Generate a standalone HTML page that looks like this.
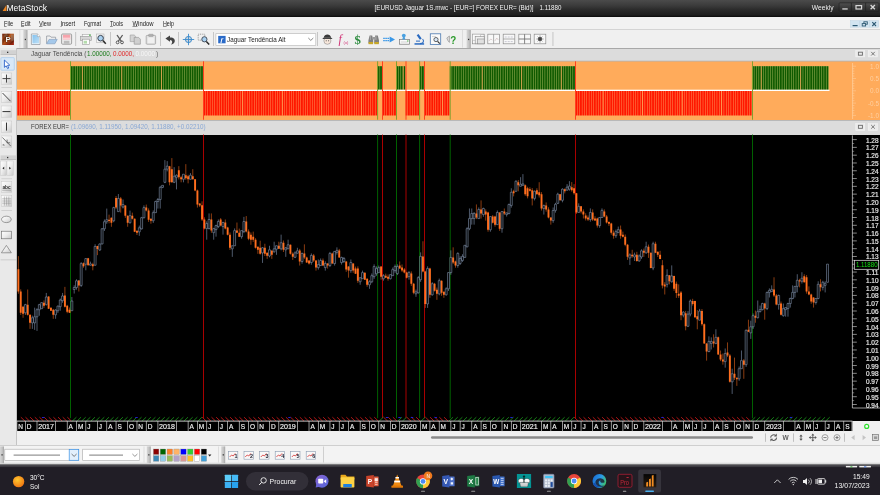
<!DOCTYPE html><html><head><meta charset="utf-8"><title>MetaStock</title><style>

html,body{margin:0;padding:0;}
body{width:880px;height:495px;overflow:hidden;background:#f0f0f0;position:relative;font-family:"Liberation Sans",sans-serif;}
.abs{position:absolute;}
#titlebar{left:0;top:0;width:880px;height:17.4px;background:linear-gradient(#4b4b4b 0%,#3a3a3a 35%,#2c2c2c 55%,#1f1f1f 88%,#0a0a0a 100%);}
#menubar{left:0;top:17.4px;width:880px;height:11.4px;background:#f2f2f2;}
#toolbar{left:0;top:28.8px;width:880px;height:19.2px;background:#f0f0f0;border-top:0.6px solid #d4d4d4;box-sizing:border-box;}
#lefttools{left:0;top:48px;width:16.4px;height:396.5px;background:#e9e9e9;border-right:0.6px solid #c4c4c4;}
#p1title{left:17px;top:48px;width:863px;height:13.3px;background:#dcdcdc;border-top:0.8px solid #a8a8a8;box-sizing:border-box;}
#p1{left:17px;top:61.3px;width:863px;height:58.4px;background:#ffab5b;}
#p2title{left:17px;top:119.7px;width:863px;height:15px;background:#dcdcdc;border-top:0.8px solid #b8b8b8;box-sizing:border-box;}
#chart{left:17px;top:134.6px;width:863px;height:296.7px;background:#000;}
#bottombar{left:0;top:444.5px;width:880px;height:21px;background:linear-gradient(#f3f3f3 0,#f3f3f3 80%,#d8d8d8 88%,#9a9a9a 94%,#4a4a4e 100%);border-top:0.6px solid #cfcfcf;box-sizing:border-box;}
#taskbar{left:0;top:465.4px;width:880px;height:30px;background:#211e26;}
svg{position:absolute;left:0;top:0;will-change:transform;}

</style></head><body>
<div id="titlebar" class="abs"></div>
<div id="menubar" class="abs"></div>
<div id="toolbar" class="abs"></div>
<div id="lefttools" class="abs"></div>
<div id="p1title" class="abs"></div>
<div id="p1" class="abs"></div>
<div id="p2title" class="abs"></div>
<div id="chart" class="abs"></div>
<div id="bottombar" class="abs"></div>
<div id="taskbar" class="abs"></div>
<svg width="880" height="495" viewBox="0 0 880 495" font-family='"Liberation Sans", sans-serif'>
<polygon points="2.6,10.9 6.5,10.9 6.5,4.8" fill="#ea8420"/>
<text x="6.4" y="10.9" font-size="9.1" fill="#fff" textLength="40.6" lengthAdjust="spacingAndGlyphs">MetaStock</text>
<text x="374.5" y="10.1" font-size="6.4" fill="#f2f2f2" textLength="159" lengthAdjust="spacingAndGlyphs">[EURUSD Jaguar 1S.mwc - [EUR=] FOREX EUR= (Bid)]</text>
<text x="539.5" y="10.1" font-size="6.4" fill="#f4f4f4" textLength="22" lengthAdjust="spacingAndGlyphs">1.11880</text>
<text x="811.8" y="9.9" font-size="6.7" fill="#f0f0f0" textLength="21.8" lengthAdjust="spacingAndGlyphs">Weekly</text>
<defs><linearGradient id="wb" x1="0" y1="0" x2="0" y2="1"><stop offset="0" stop-color="#505050"/><stop offset="0.5" stop-color="#3c3c3c"/><stop offset="1" stop-color="#2a2a2a"/></linearGradient></defs>
<rect x="839.1" y="2.9" width="39.8" height="8.3" rx="0.8" fill="url(#wb)" stroke="#1a1a1a" stroke-width="0.5"/>
<path d="M851.4 2.9 v8.3 M865.6 2.9 v8.3" stroke="#1c1c1c" stroke-width="0.6"/>
<rect x="842.3" y="8.3" width="5.4" height="1.3" fill="#d8d8d8"/>
<rect x="856" y="5.6" width="5.6" height="3.4" fill="none" stroke="#d8d8d8" stroke-width="1.2"/>
<path d="M870.6 5 L874.9 9.2 M874.9 5 L870.6 9.2" stroke="#d8d8d8" stroke-width="1.3"/>
<text x="4" y="25.8" font-size="7.3" fill="#222" textLength="9.2" lengthAdjust="spacingAndGlyphs">File</text>
<text x="21" y="25.8" font-size="7.3" fill="#222" textLength="9.5" lengthAdjust="spacingAndGlyphs">Edit</text>
<text x="39" y="25.8" font-size="7.3" fill="#222" textLength="12" lengthAdjust="spacingAndGlyphs">View</text>
<text x="60.5" y="25.8" font-size="7.3" fill="#222" textLength="14.5" lengthAdjust="spacingAndGlyphs">Insert</text>
<text x="84" y="25.8" font-size="7.3" fill="#222" textLength="17" lengthAdjust="spacingAndGlyphs">Format</text>
<text x="110" y="25.8" font-size="7.3" fill="#222" textLength="13" lengthAdjust="spacingAndGlyphs">Tools</text>
<text x="132.5" y="25.8" font-size="7.3" fill="#222" textLength="21" lengthAdjust="spacingAndGlyphs">Window</text>
<text x="163" y="25.8" font-size="7.3" fill="#222" textLength="11" lengthAdjust="spacingAndGlyphs">Help</text>
<rect x="4" y="26.4" width="2.6" height="0.55" fill="#444"/>
<rect x="21" y="26.4" width="3" height="0.55" fill="#444"/>
<rect x="39" y="26.4" width="3.4" height="0.55" fill="#444"/>
<rect x="60.5" y="26.4" width="1.2" height="0.55" fill="#444"/>
<rect x="88" y="26.4" width="2.8" height="0.55" fill="#444"/>
<rect x="110" y="26.4" width="2.8" height="0.55" fill="#444"/>
<rect x="132.5" y="26.4" width="5" height="0.55" fill="#444"/>
<rect x="163" y="26.4" width="3.6" height="0.55" fill="#444"/>
<rect x="850.5" y="20.6" width="9.3" height="6.6" fill="#d2e4f0" stroke="#b8d0e0" stroke-width="0.4"/>
<rect x="860" y="20.6" width="9.3" height="6.6" fill="#d2e4f0" stroke="#b8d0e0" stroke-width="0.4"/>
<rect x="869.5" y="20.6" width="9.3" height="6.6" fill="#d2e4f0" stroke="#b8d0e0" stroke-width="0.4"/>
<rect x="852.6" y="25" width="5" height="1.2" fill="#2c5872"/>
<rect x="863.9" y="21.8" width="3.4" height="2.4" fill="none" stroke="#2c5872" stroke-width="0.9"/><rect x="862.2" y="23.6" width="3.4" height="2.4" fill="#d2e4f0" stroke="#2c5872" stroke-width="0.9"/>
<path d="M872.3 22.2 L876 26 M876 22.2 L872.3 26" stroke="#2c5872" stroke-width="1.1"/>
<defs><linearGradient id="gg" x1="0" y1="0" x2="1" y2="0"><stop offset="0" stop-color="#d6d6d6"/><stop offset="0.55" stop-color="#c4c4c4"/><stop offset="1" stop-color="#a6a6a6"/></linearGradient><linearGradient id="bt" x1="0" y1="0" x2="1" y2="1"><stop offset="0" stop-color="#ffffff"/><stop offset="0.5" stop-color="#ececec"/><stop offset="1" stop-color="#c8c8c8"/></linearGradient><linearGradient id="pgd" x1="0" y1="0" x2="1" y2="1"><stop offset="0" stop-color="#84c2ee"/><stop offset="1" stop-color="#bfe0f6"/></linearGradient><linearGradient id="pg" x1="0" y1="0" x2="1" y2="1"><stop offset="0" stop-color="#6a2410"/><stop offset="0.45" stop-color="#c05a1c"/><stop offset="0.7" stop-color="#8a3014"/><stop offset="1" stop-color="#a01c0c"/></linearGradient></defs>
<rect x="19.6" y="29.6" width="0.6" height="18" fill="#cfcfcf"/>
<rect x="2.2" y="33.7" width="11.7" height="11.3" fill="url(#pg)"/><path d="M2.2 40 l5 -6.3 h3 l-8 11.3z M9 45 l4.9 -7 v4z" fill="#4a1808" opacity="0.45"/><path d="M10.6 34.6 l3.3 0 v5.4 l-2.4 1.6z" fill="#9a8068" opacity="0.6"/><path d="M4 35 l3 -1 l1 2 l-3.4 1.6z" fill="#7a6a5a" opacity="0.5"/>
<text x="5.6" y="42.3" font-size="7.8" fill="#f6f2ee" font-weight="bold" stroke="#2a1408" stroke-width="0.6" paint-order="stroke">P</text>
<rect x="23.3" y="30" width="4.2" height="18" fill="url(#gg)"/><rect x="24.8" y="38.8" width="1.1" height="1.3" fill="#222"/>
<path d="M31.4 34 h6 l2.6 2.6 v7.9 h-8.6z" fill="#fff" stroke="#8a929c" stroke-width="0.7"/><path d="M32.4 35 h4.6 l2 2 v6.5 h-6.6z" fill="url(#pgd)"/><path d="M37.4 34 v2.6 h2.6" fill="#fff" stroke="#8a929c" stroke-width="0.5"/>
<path d="M46.6 43.6 v-7.6 h3.4 l1 1.2 h4.6 v2.2" fill="#f0f0f0" stroke="#8a9098" stroke-width="0.7"/><path d="M46.6 43.8 l2.4 -4.4 h8.2 l-2.4 4.4z" fill="#a4c8ea" stroke="#7a97b8" stroke-width="0.6"/>
<rect x="61.6" y="34" width="10" height="10.2" rx="1" fill="#ececec" stroke="#8c8c8c" stroke-width="0.8"/><rect x="63" y="34.8" width="7.2" height="4.6" fill="#f7a4ac"/><rect x="63" y="37.6" width="7.2" height="1.8" fill="#fbd0d4"/><rect x="63.8" y="40.8" width="5.6" height="3" fill="#bcbcbc"/>
<rect x="75.4" y="32" width="0.7" height="14" fill="#b4b4b4"/>
<rect x="82.2" y="34.4" width="8" height="2.6" fill="#fafafa" stroke="#999" stroke-width="0.5"/><rect x="80.4" y="36.6" width="11" height="4" fill="#d8d8d8" stroke="#999" stroke-width="0.6"/><rect x="82.4" y="39.2" width="7" height="5.2" fill="#fdfdfd" stroke="#999" stroke-width="0.6"/><rect x="83.6" y="40.8" width="3.4" height="2.8" fill="#b4dcac"/><rect x="89.2" y="34.4" width="1.4" height="1.6" fill="#58c058"/>
<rect x="96.4" y="34" width="7.6" height="8.6" fill="#f4f4f4" stroke="#a8a8a8" stroke-width="0.5"/><circle cx="100.6" cy="38.2" r="2.8" fill="#a8d0f0" stroke="#3c4450" stroke-width="1"/><path d="M102.8 40.4 L105.8 43.8" stroke="#2a2a2a" stroke-width="1.5"/>
<rect x="110.3" y="32" width="0.7" height="14" fill="#b4b4b4"/>
<path d="M117 35 L121.4 41.4 M122.6 35 L118.2 41.4" stroke="#5a5a5a" stroke-width="1.3" fill="none"/><circle cx="117.6" cy="42.4" r="1.4" fill="none" stroke="#4a4a4a" stroke-width="0.9"/><circle cx="122" cy="42.4" r="1.4" fill="none" stroke="#4a4a4a" stroke-width="0.9"/>
<path d="M130.2 35 h4 l1.6 1.6 v5 h-5.6z" fill="#d4d4d4" stroke="#9a9a9a" stroke-width="0.6"/><path d="M134.2 37.4 h4.4 l1.8 1.8 v5 h-6.2z" fill="#d0d0d0" stroke="#8e8e8e" stroke-width="0.6"/>
<rect x="146.2" y="35.4" width="9.4" height="8.8" rx="0.8" fill="#e2e2e2" stroke="#9a9a9a" stroke-width="0.7"/><rect x="148.6" y="34.2" width="4.6" height="2.2" rx="0.6" fill="#b0b0b0" stroke="#8a8a8a" stroke-width="0.4"/><rect x="147.8" y="37.6" width="6.2" height="5.6" fill="#f0f0f0"/>
<rect x="160.3" y="32" width="0.7" height="14" fill="#b4b4b4"/>
<path d="M165.4 38.6 L170 35.6 V37.4 C173.4 37.2 175.6 39.4 174.6 42 C174 43.6 172.6 44.4 171 44.4 C172.8 43 172.6 40.2 170 40 V41.8z" fill="#444"/>
<rect x="178.3" y="32" width="0.7" height="14" fill="#b4b4b4"/>
<circle cx="188.5" cy="39.5" r="3.1" fill="#d4d8dc" stroke="#3a8acc" stroke-width="1"/><path d="M188.5 33.8 V45.2 M182.8 39.5 H194.2" stroke="#3a8acc" stroke-width="0.9"/>
<rect x="198.2" y="34.2" width="6.6" height="6" fill="none" stroke="#666" stroke-width="0.6" stroke-dasharray="1 0.8"/><circle cx="204.4" cy="39.3" r="2.6" fill="#a8d0f0" stroke="#3c4450" stroke-width="0.9"/><path d="M206.3 41.4 L209.2 44.4" stroke="#2a2a2a" stroke-width="1.5"/>
<rect x="213.2" y="32" width="0.7" height="14" fill="#b4b4b4"/>
<rect x="215.9" y="33.7" width="99.9" height="11.8" fill="#fff" stroke="#b4b4b4" stroke-width="0.6"/>
<rect x="317.3" y="32" width="0.7" height="14" fill="#b4b4b4"/>
<rect x="218.2" y="35.9" width="7.4" height="7.4" fill="#2a6ac8"/>
<text x="220.6" y="42" font-size="7" fill="#fff" font-style="italic" font-weight="bold" font-family="Liberation Serif, serif">f</text>
<text x="227.1" y="41.9" font-size="7.1" fill="#222" textLength="58.4" lengthAdjust="spacingAndGlyphs">Jaguar Tendência Alt</text>
<path d="M308.3 38 L310.8 40.4 L313.3 38" fill="none" stroke="#555" stroke-width="0.7"/>
<circle cx="327.4" cy="40.8" r="3.5" fill="#f8e8dc" stroke="#777" stroke-width="0.5"/><path d="M322.2 39 H332.6 L331 37.6 C330.6 33.6 324.2 33.6 323.8 37.6z" fill="#3a3a3a"/><path d="M324 37.8 h6.8" stroke="#888" stroke-width="0.6"/><circle cx="326.2" cy="40.8" r="0.5" fill="#333"/><circle cx="328.6" cy="40.8" r="0.5" fill="#333"/>
<text x="338.4" y="43" font-size="12" fill="#d03476" font-style="italic" font-family="Liberation Serif, serif">f</text>
<text x="343.6" y="44.2" font-size="3.8" fill="#d03476" textLength="4.8" lengthAdjust="spacingAndGlyphs">(x)</text>
<text x="354.6" y="43.8" font-size="11.5" fill="#2a8a3c" font-weight="bold" font-family="Liberation Serif, serif" textLength="6.4" lengthAdjust="spacingAndGlyphs">$</text>
<path d="M369.6 35.4 h2.6 l1 5 v3 h-4.8 v-3z M375.2 35.4 h2.6 l1.2 5 v3 h-4.8 v-3z" fill="#808080"/><rect x="372.4" y="37" width="3.2" height="2.6" fill="#9a9a9a"/><rect x="368.6" y="42" width="4.4" height="2.2" fill="#c8a828"/><rect x="374.4" y="42" width="4.4" height="2.2" fill="#c8a828"/><path d="M370.4 36 v4 M376 36 v4" stroke="#c0c0c0" stroke-width="0.6"/>
<path d="M383.2 38.4 h6.4 M383.2 40.6 h6.4" stroke="#3a98e8" stroke-width="1.3" stroke-dasharray="1.6 0.5"/><path d="M389.6 36.6 L395 39.5 L389.6 42.4z" fill="#3a98e8"/>
<rect x="399.4" y="39.4" width="10" height="4.8" fill="#fafafa" stroke="#777" stroke-width="0.7"/><path d="M400.8 42 h7" stroke="#bbb" stroke-width="0.6"/><rect x="407.2" y="40.4" width="1.2" height="1.2" fill="#48b048"/><path d="M402.2 39.4 l0.8 -2.4 h1.6 l0.8 2.4z" fill="#4aa0e0"/><circle cx="403.8" cy="35.6" r="1.9" fill="#4aa0e0"/>
<path d="M418.5 34 l3.2 4.6 l-1.8 1.2 l-3.2 -4.6z" fill="#2a6ac0"/><path d="M422.6 39 C424.6 41.4 423 43.6 420 43.6" fill="none" stroke="#2a6ac0" stroke-width="1.1"/><rect x="414.5" y="43.2" width="9.6" height="1.5" fill="#2a6ac0"/><rect x="416" y="40.6" width="4" height="1" fill="#2a6ac0"/>
<rect x="430.3" y="33.8" width="10.4" height="10.6" fill="#fafafa" stroke="#4a78b0" stroke-width="0.8"/><path d="M432 36.6 h4" stroke="#aaa" stroke-width="0.5"/><circle cx="436" cy="39.6" r="2.1" fill="#d8e8f8" stroke="#444" stroke-width="0.8"/><path d="M437.6 41.3 L439.8 43.6" stroke="#333" stroke-width="1.2"/>
<path d="M446.8 38 l2.6 -2 v6.4 l-1.4 -1.6z" fill="#e0e0e0" stroke="#777" stroke-width="0.5"/>
<text x="450.2" y="44" font-size="10" fill="#2a9a2a" textLength="6" lengthAdjust="spacingAndGlyphs" font-weight="bold">?</text>
<rect x="462.4" y="29.6" width="0.6" height="18" fill="#cfcfcf"/>
<rect x="466.6" y="30" width="4.2" height="18" fill="url(#gg)"/><rect x="468.1" y="38.8" width="1.1" height="1.3" fill="#222"/>
<rect x="472.6" y="34.2" width="11.6" height="9.6" fill="#f8f8f8" stroke="#8c8c8c" stroke-width="0.7"/>
<rect x="472.6" y="34.2" width="8" height="6" fill="#fafafa" stroke="#aaa" stroke-width="0.5"/><rect x="475.20000000000005" y="36.6" width="9" height="7.2" fill="#f0f0f0" stroke="#8c8c8c" stroke-width="0.6"/><rect x="477.40000000000003" y="39" width="6.8" height="4.8" fill="#e0e0e0" stroke="#8c8c8c" stroke-width="0.6"/>
<rect x="487.8" y="34.2" width="11.6" height="9.6" fill="#f8f8f8" stroke="#8c8c8c" stroke-width="0.7"/>
<path d="M493.6 34.2 v9.6" stroke="#8c8c8c" stroke-width="0.7"/><path d="M488.8 41 l2 -2 l1.5 1 M494.8 41 l2 -3 l1.5 2" stroke="#c0a8a8" stroke-width="0.5" fill="none"/>
<rect x="503.2" y="34.2" width="11.6" height="9.6" fill="#f8f8f8" stroke="#8c8c8c" stroke-width="0.7"/>
<path d="M503.2 39 h11.6" stroke="#8c8c8c" stroke-width="0.7"/><path d="M504.7 37 h8 M504.7 41.6 h8" stroke="#a8a8b8" stroke-width="0.6" stroke-dasharray="2 1"/>
<rect x="518.8" y="34.2" width="11.6" height="9.6" fill="#f8f8f8" stroke="#8c8c8c" stroke-width="0.7"/>
<path d="M518.8 39 h11.6 M524.5999999999999 34.2 v9.6" stroke="#666" stroke-width="0.8"/>
<rect x="534.2" y="34.2" width="11.6" height="9.6" fill="#f8f8f8" stroke="#8c8c8c" stroke-width="0.7"/>
<circle cx="540.0" cy="39" r="2" fill="#444"/><path d="M540.0 35.4 v7.2 M536.4000000000001 39 h7.2 M537.6 36.6 l4.8 4.8 M542.4000000000001 36.6 l-4.8 4.8" stroke="#444" stroke-width="0.5"/>
<rect x="552.6" y="32" width="0.7" height="14" fill="#b4b4b4"/>
<rect x="0.6" y="50.2" width="15.6" height="4.4" fill="#d2d2d2"/><rect x="0.6" y="54.1" width="15.6" height="0.5" fill="#a8a8a8"/><rect x="7" y="51.7" width="1.3" height="1.3" fill="#333"/>
<rect x="0.9" y="57.6" width="13.4" height="12.6" rx="0.8" fill="#d8e8f8" stroke="#9cc4ec" stroke-width="0.6"/>
<path d="M4.4 60 L4.4 67.4 L6.2 65.8 L7.6 68.6 L8.8 68 L7.5 65.4 L9.8 65.2z" fill="#fff" stroke="#2a62c8" stroke-width="0.9" stroke-linejoin="round"/>
<rect x="1.2" y="73" width="10.6" height="11.2" fill="url(#bt)" stroke="#c0c0c0" stroke-width="0.4"/>
<path d="M6.5 74.6 v8 M2.5 78.6 h8" stroke="#333" stroke-width="0.9"/>
<rect x="1.4" y="87" width="10.6" height="0.5" fill="#b8b8b8"/>
<rect x="1.2" y="91.5" width="10.6" height="11.2" fill="url(#bt)" stroke="#c0c0c0" stroke-width="0.4"/>
<path d="M2.5 93 L10.5 101.2" stroke="#333" stroke-width="0.9"/>
<rect x="1.2" y="106" width="10.6" height="11.2" fill="url(#bt)" stroke="#c0c0c0" stroke-width="0.4"/>
<path d="M2.5 111.6 h8" stroke="#333" stroke-width="1"/>
<rect x="1.2" y="121" width="10.6" height="11.2" fill="url(#bt)" stroke="#c0c0c0" stroke-width="0.4"/>
<path d="M6.5 122.6 v8" stroke="#333" stroke-width="1"/>
<rect x="1.2" y="136" width="10.6" height="11.2" fill="url(#bt)" stroke="#c0c0c0" stroke-width="0.4"/>
<path d="M2.3 137.4 L10.7 146 M7.1 139.6 v3.2 h3" stroke="#444" stroke-width="0.7" fill="none"/>
<text x="2.6" y="146.4" font-size="4" fill="#333">s</text>
<rect x="0.6" y="155.4" width="15.6" height="4.4" fill="#d2d2d2"/><rect x="0.6" y="159.3" width="15.6" height="0.5" fill="#a8a8a8"/><rect x="7" y="156.9" width="1.3" height="1.3" fill="#333"/>
<rect x="0.6" y="161" width="5.8" height="14.4" fill="url(#bt)" stroke="#c0c0c0" stroke-width="0.4"/><rect x="7" y="161" width="6.2" height="14.4" fill="url(#bt)" stroke="#c0c0c0" stroke-width="0.4"/>
<path d="M4.2 166.8 L2.4 168.2 L4.2 169.6z M9.2 166.8 L11 168.2 L9.2 169.6z" fill="#222"/>
<rect x="1.4" y="178.6" width="10.6" height="0.5" fill="#b8b8b8"/>
<rect x="1.2" y="181.6" width="10.6" height="10.6" fill="url(#bt)" stroke="#c0c0c0" stroke-width="0.4"/>
<text x="2.4" y="189.2" font-size="5.2" fill="#333" textLength="8.4" lengthAdjust="spacingAndGlyphs" font-weight="bold">abc</text>
<path d="M2.2 190.2 h8.8" stroke="#555" stroke-width="0.4"/>
<rect x="1.2" y="195.6" width="10.6" height="11" fill="url(#bt)" stroke="#c0c0c0" stroke-width="0.4"/>
<path d="M4.4 196.6 v9 M6.6 196.6 v9 M8.8 196.6 v9 M2.2 198.8 h9 M2.2 201 h9 M2.2 203.2 h9" stroke="#777" stroke-width="0.4"/>
<rect x="1.4" y="210" width="10.6" height="0.5" fill="#b8b8b8"/>
<ellipse cx="6.4" cy="219.4" rx="4.9" ry="3.2" fill="url(#bt)" stroke="#666" stroke-width="0.6"/>
<rect x="1.6" y="231.2" width="9.8" height="7.6" fill="url(#bt)" stroke="#666" stroke-width="0.6"/>
<path d="M6.4 245.4 L11.4 252.8 H1.4z" fill="url(#bt)" stroke="#666" stroke-width="0.6"/>
<rect x="0.6" y="259.6" width="15.6" height="0.6" fill="#b8b8b8"/>
<text x="31" y="56.2" font-size="6.7" fill="#4a4a4a" textLength="55.5" lengthAdjust="spacingAndGlyphs">Jaguar Tendência (</text>
<text x="87" y="56.2" font-size="6.7" fill="#1a7a1a" textLength="24.5" lengthAdjust="spacingAndGlyphs">1.00000,</text>
<text x="113" y="56.2" font-size="6.7" fill="#e02828" textLength="21" lengthAdjust="spacingAndGlyphs">0.0000,</text>
<text x="135.5" y="56.2" font-size="6.7" fill="#f6f6f6" textLength="19.5" lengthAdjust="spacingAndGlyphs">0.0000</text>
<text x="156.3" y="56.2" font-size="6.7" fill="#4a4a4a" textLength="1.8" lengthAdjust="spacingAndGlyphs">)</text>
<rect x="855.8" y="50.5" width="9" height="6.4" fill="#ebebeb" stroke="#f6f6f6" stroke-width="0.5"/>
<rect x="868.2" y="50.5" width="9.4" height="6.4" fill="#ebebeb" stroke="#f6f6f6" stroke-width="0.5"/>
<rect x="858.4" y="52.2" width="4" height="3" fill="none" stroke="#6a6a6a" stroke-width="0.9"/>
<path d="M871.2 51.9 l3.6 3.6 M874.8 51.9 l-3.6 3.6" stroke="#6a6a6a" stroke-width="0.9"/>
<rect x="17" y="60.7" width="863" height="0.8" fill="#b4b4b4"/>
<text x="31" y="129.2" font-size="6.9" fill="#3a3a3a" textLength="38" lengthAdjust="spacingAndGlyphs">FOREX EUR=</text>
<text x="71" y="129.2" font-size="6.9" fill="#8aa8d4" textLength="134.5" lengthAdjust="spacingAndGlyphs">(1.09690, 1.11950, 1.09420, 1.11880, +0.02210)</text>
<rect x="855.8" y="123.6" width="9" height="6.8" fill="#ebebeb" stroke="#f6f6f6" stroke-width="0.5"/>
<rect x="868.2" y="123.6" width="9.4" height="6.8" fill="#ebebeb" stroke="#f6f6f6" stroke-width="0.5"/>
<rect x="858.4" y="125.3" width="4" height="3" fill="none" stroke="#6a6a6a" stroke-width="0.9"/>
<path d="M871.2 125.0 l3.6 3.6 M874.8 125.0 l-3.6 3.6" stroke="#6a6a6a" stroke-width="0.9"/>
<rect x="17.20" y="91" width="53.45" height="24.4" fill="#ffa866"/>
<rect x="70.67" y="66.2" width="132.50" height="23.6" fill="#96ac50"/>
<rect x="203.20" y="91" width="174.35" height="24.4" fill="#ffa866"/>
<rect x="377.57" y="66.2" width="4.62" height="23.6" fill="#96ac50"/>
<rect x="382.22" y="91" width="13.93" height="24.4" fill="#ffa866"/>
<rect x="396.17" y="66.2" width="9.28" height="23.6" fill="#96ac50"/>
<rect x="405.47" y="91" width="13.93" height="24.4" fill="#ffa866"/>
<rect x="419.42" y="66.2" width="4.63" height="23.6" fill="#96ac50"/>
<rect x="424.07" y="91" width="25.55" height="24.4" fill="#ffa866"/>
<rect x="449.65" y="66.2" width="125.53" height="23.6" fill="#96ac50"/>
<rect x="575.20" y="91" width="176.68" height="24.4" fill="#ffa866"/>
<rect x="751.90" y="66.2" width="76.70" height="23.6" fill="#96ac50"/>
<path d="M71.77 66.2v23.6M74.10 66.2v23.6M76.42 66.2v23.6M78.75 66.2v23.6M81.07 66.2v23.6M83.40 66.2v23.6M85.72 66.2v23.6M88.05 66.2v23.6M90.37 66.2v23.6M92.70 66.2v23.6M95.03 66.2v23.6M97.35 66.2v23.6M99.67 66.2v23.6M102.00 66.2v23.6M104.32 66.2v23.6M106.65 66.2v23.6M108.97 66.2v23.6M111.30 66.2v23.6M113.62 66.2v23.6M115.95 66.2v23.6M118.28 66.2v23.6M120.60 66.2v23.6M122.92 66.2v23.6M125.25 66.2v23.6M127.57 66.2v23.6M129.90 66.2v23.6M132.22 66.2v23.6M134.55 66.2v23.6M136.87 66.2v23.6M139.20 66.2v23.6M141.53 66.2v23.6M143.85 66.2v23.6M146.17 66.2v23.6M148.50 66.2v23.6M150.82 66.2v23.6M153.15 66.2v23.6M155.47 66.2v23.6M157.80 66.2v23.6M160.12 66.2v23.6M162.45 66.2v23.6M164.78 66.2v23.6M167.10 66.2v23.6M169.42 66.2v23.6M171.75 66.2v23.6M174.07 66.2v23.6M176.40 66.2v23.6M178.72 66.2v23.6M181.05 66.2v23.6M183.37 66.2v23.6M185.70 66.2v23.6M188.03 66.2v23.6M190.35 66.2v23.6M192.67 66.2v23.6M195.00 66.2v23.6M197.32 66.2v23.6M199.65 66.2v23.6M201.97 66.2v23.6M378.67 66.2v23.6M381.00 66.2v23.6M397.27 66.2v23.6M399.60 66.2v23.6M401.92 66.2v23.6M404.25 66.2v23.6M420.52 66.2v23.6M422.85 66.2v23.6M450.75 66.2v23.6M453.07 66.2v23.6M455.40 66.2v23.6M457.72 66.2v23.6M460.05 66.2v23.6M462.37 66.2v23.6M464.70 66.2v23.6M467.02 66.2v23.6M469.35 66.2v23.6M471.67 66.2v23.6M474.00 66.2v23.6M476.32 66.2v23.6M478.65 66.2v23.6M480.97 66.2v23.6M483.30 66.2v23.6M485.62 66.2v23.6M487.95 66.2v23.6M490.27 66.2v23.6M492.60 66.2v23.6M494.92 66.2v23.6M497.25 66.2v23.6M499.57 66.2v23.6M501.90 66.2v23.6M504.22 66.2v23.6M506.55 66.2v23.6M508.87 66.2v23.6M511.20 66.2v23.6M513.52 66.2v23.6M515.85 66.2v23.6M518.17 66.2v23.6M520.50 66.2v23.6M522.82 66.2v23.6M525.15 66.2v23.6M527.48 66.2v23.6M529.80 66.2v23.6M532.12 66.2v23.6M534.45 66.2v23.6M536.77 66.2v23.6M539.10 66.2v23.6M541.42 66.2v23.6M543.75 66.2v23.6M546.07 66.2v23.6M548.40 66.2v23.6M550.73 66.2v23.6M553.05 66.2v23.6M555.37 66.2v23.6M557.70 66.2v23.6M560.02 66.2v23.6M562.35 66.2v23.6M564.67 66.2v23.6M567.00 66.2v23.6M569.32 66.2v23.6M571.65 66.2v23.6M573.98 66.2v23.6M753.00 66.2v23.6M755.32 66.2v23.6M757.65 66.2v23.6M759.98 66.2v23.6M762.30 66.2v23.6M764.62 66.2v23.6M766.95 66.2v23.6M769.27 66.2v23.6M771.60 66.2v23.6M773.92 66.2v23.6M776.25 66.2v23.6M778.57 66.2v23.6M780.90 66.2v23.6M783.23 66.2v23.6M785.55 66.2v23.6M787.88 66.2v23.6M790.20 66.2v23.6M792.52 66.2v23.6M794.85 66.2v23.6M797.17 66.2v23.6M799.50 66.2v23.6M801.82 66.2v23.6M804.15 66.2v23.6M806.48 66.2v23.6M808.80 66.2v23.6M811.12 66.2v23.6M813.45 66.2v23.6M815.77 66.2v23.6M818.10 66.2v23.6M820.42 66.2v23.6M822.75 66.2v23.6M825.07 66.2v23.6M827.40 66.2v23.6" stroke="#0f5a00" stroke-width="1.75" fill="none"/>
<path d="M18.30 91v24.4M20.62 91v24.4M22.95 91v24.4M25.27 91v24.4M27.60 91v24.4M29.92 91v24.4M32.25 91v24.4M34.57 91v24.4M36.90 91v24.4M39.22 91v24.4M41.55 91v24.4M43.87 91v24.4M46.20 91v24.4M48.52 91v24.4M50.85 91v24.4M53.17 91v24.4M55.50 91v24.4M57.82 91v24.4M60.15 91v24.4M62.47 91v24.4M64.80 91v24.4M67.12 91v24.4M69.45 91v24.4M204.30 91v24.4M206.62 91v24.4M208.95 91v24.4M211.28 91v24.4M213.60 91v24.4M215.92 91v24.4M218.25 91v24.4M220.57 91v24.4M222.90 91v24.4M225.22 91v24.4M227.55 91v24.4M229.87 91v24.4M232.20 91v24.4M234.53 91v24.4M236.85 91v24.4M239.17 91v24.4M241.50 91v24.4M243.82 91v24.4M246.15 91v24.4M248.47 91v24.4M250.80 91v24.4M253.12 91v24.4M255.45 91v24.4M257.77 91v24.4M260.10 91v24.4M262.42 91v24.4M264.75 91v24.4M267.07 91v24.4M269.40 91v24.4M271.72 91v24.4M274.05 91v24.4M276.37 91v24.4M278.70 91v24.4M281.02 91v24.4M283.35 91v24.4M285.67 91v24.4M288.00 91v24.4M290.32 91v24.4M292.65 91v24.4M294.97 91v24.4M297.30 91v24.4M299.62 91v24.4M301.95 91v24.4M304.27 91v24.4M306.60 91v24.4M308.92 91v24.4M311.25 91v24.4M313.57 91v24.4M315.90 91v24.4M318.22 91v24.4M320.55 91v24.4M322.87 91v24.4M325.20 91v24.4M327.52 91v24.4M329.85 91v24.4M332.17 91v24.4M334.50 91v24.4M336.82 91v24.4M339.15 91v24.4M341.47 91v24.4M343.80 91v24.4M346.12 91v24.4M348.45 91v24.4M350.77 91v24.4M353.10 91v24.4M355.42 91v24.4M357.75 91v24.4M360.07 91v24.4M362.40 91v24.4M364.72 91v24.4M367.05 91v24.4M369.37 91v24.4M371.70 91v24.4M374.02 91v24.4M376.35 91v24.4M383.32 91v24.4M385.65 91v24.4M387.97 91v24.4M390.30 91v24.4M392.62 91v24.4M394.95 91v24.4M406.57 91v24.4M408.90 91v24.4M411.22 91v24.4M413.55 91v24.4M415.87 91v24.4M418.20 91v24.4M425.17 91v24.4M427.50 91v24.4M429.82 91v24.4M432.15 91v24.4M434.47 91v24.4M436.80 91v24.4M439.12 91v24.4M441.45 91v24.4M443.77 91v24.4M446.10 91v24.4M448.42 91v24.4M576.30 91v24.4M578.62 91v24.4M580.95 91v24.4M583.27 91v24.4M585.60 91v24.4M587.92 91v24.4M590.25 91v24.4M592.57 91v24.4M594.90 91v24.4M597.23 91v24.4M599.55 91v24.4M601.88 91v24.4M604.20 91v24.4M606.52 91v24.4M608.85 91v24.4M611.17 91v24.4M613.50 91v24.4M615.82 91v24.4M618.15 91v24.4M620.48 91v24.4M622.80 91v24.4M625.12 91v24.4M627.45 91v24.4M629.77 91v24.4M632.10 91v24.4M634.42 91v24.4M636.75 91v24.4M639.07 91v24.4M641.40 91v24.4M643.73 91v24.4M646.05 91v24.4M648.38 91v24.4M650.70 91v24.4M653.02 91v24.4M655.35 91v24.4M657.67 91v24.4M660.00 91v24.4M662.32 91v24.4M664.65 91v24.4M666.98 91v24.4M669.30 91v24.4M671.62 91v24.4M673.95 91v24.4M676.27 91v24.4M678.60 91v24.4M680.92 91v24.4M683.25 91v24.4M685.57 91v24.4M687.90 91v24.4M690.23 91v24.4M692.55 91v24.4M694.88 91v24.4M697.20 91v24.4M699.52 91v24.4M701.85 91v24.4M704.17 91v24.4M706.50 91v24.4M708.82 91v24.4M711.15 91v24.4M713.48 91v24.4M715.80 91v24.4M718.12 91v24.4M720.45 91v24.4M722.77 91v24.4M725.10 91v24.4M727.42 91v24.4M729.75 91v24.4M732.07 91v24.4M734.40 91v24.4M736.73 91v24.4M739.05 91v24.4M741.38 91v24.4M743.70 91v24.4M746.02 91v24.4M748.35 91v24.4M750.67 91v24.4" stroke="#ff1800" stroke-width="1.9" fill="none"/>
<rect x="81.92" y="66.2" width="0.75" height="23.6" fill="#ffab5b"/>
<rect x="121.44" y="66.2" width="0.75" height="23.6" fill="#ffab5b"/>
<rect x="160.97" y="66.2" width="0.75" height="23.6" fill="#ffab5b"/>
<rect x="242.34" y="91" width="0.75" height="24.4" fill="#ffab5b"/>
<rect x="281.87" y="91" width="0.75" height="24.4" fill="#ffab5b"/>
<rect x="321.39" y="91" width="0.75" height="24.4" fill="#ffab5b"/>
<rect x="360.92" y="91" width="0.75" height="24.4" fill="#ffab5b"/>
<rect x="402.77" y="66.2" width="0.75" height="23.6" fill="#ffab5b"/>
<rect x="442.29" y="91" width="0.75" height="24.4" fill="#ffab5b"/>
<rect x="481.82" y="66.2" width="0.75" height="23.6" fill="#ffab5b"/>
<rect x="521.34" y="66.2" width="0.75" height="23.6" fill="#ffab5b"/>
<rect x="560.87" y="66.2" width="0.75" height="23.6" fill="#ffab5b"/>
<rect x="602.72" y="91" width="0.75" height="24.4" fill="#ffab5b"/>
<rect x="642.24" y="91" width="0.75" height="24.4" fill="#ffab5b"/>
<rect x="681.77" y="91" width="0.75" height="24.4" fill="#ffab5b"/>
<rect x="721.29" y="91" width="0.75" height="24.4" fill="#ffab5b"/>
<rect x="760.82" y="66.2" width="0.75" height="23.6" fill="#ffab5b"/>
<rect x="800.34" y="66.2" width="0.75" height="23.6" fill="#ffab5b"/>
<rect x="41.98" y="91" width="0.75" height="24.4" fill="#ffab5b"/>
<rect x="17" y="89.7" width="812.5" height="1.3" fill="#fff"/>
<rect x="70.00" y="61.3" width="1" height="58.4" fill="#80a030"/>
<rect x="203.00" y="61.3" width="1" height="58.4" fill="#ff4020"/>
<rect x="377.10" y="61.3" width="1" height="58.4" fill="#80a030"/>
<rect x="382.00" y="61.3" width="1" height="58.4" fill="#ff4020"/>
<rect x="396.00" y="61.3" width="1" height="58.4" fill="#80a030"/>
<rect x="405.50" y="61.3" width="1" height="58.4" fill="#ff4020"/>
<rect x="419.10" y="61.3" width="1" height="58.4" fill="#80a030"/>
<rect x="424.00" y="61.3" width="1" height="58.4" fill="#ff4020"/>
<rect x="449.70" y="61.3" width="1" height="58.4" fill="#80a030"/>
<rect x="575.00" y="61.3" width="1" height="58.4" fill="#ff4020"/>
<rect x="752.00" y="61.3" width="1" height="58.4" fill="#80a030"/>
<path d="M852.6 63 V119" stroke="#ffd2a4" stroke-width="0.7"/>
<path d="M852.6 66.20 h3.4" stroke="#ffd2a4" stroke-width="0.5"/>
<path d="M852.6 68.66 h1.8" stroke="#ffd2a4" stroke-width="0.5"/>
<path d="M852.6 71.12 h1.8" stroke="#ffd2a4" stroke-width="0.5"/>
<path d="M852.6 73.58 h1.8" stroke="#ffd2a4" stroke-width="0.5"/>
<path d="M852.6 76.04 h1.8" stroke="#ffd2a4" stroke-width="0.5"/>
<path d="M852.6 78.50 h3.4" stroke="#ffd2a4" stroke-width="0.5"/>
<path d="M852.6 80.96 h1.8" stroke="#ffd2a4" stroke-width="0.5"/>
<path d="M852.6 83.42 h1.8" stroke="#ffd2a4" stroke-width="0.5"/>
<path d="M852.6 85.88 h1.8" stroke="#ffd2a4" stroke-width="0.5"/>
<path d="M852.6 88.34 h1.8" stroke="#ffd2a4" stroke-width="0.5"/>
<path d="M852.6 90.80 h3.4" stroke="#ffd2a4" stroke-width="0.5"/>
<path d="M852.6 93.26 h1.8" stroke="#ffd2a4" stroke-width="0.5"/>
<path d="M852.6 95.72 h1.8" stroke="#ffd2a4" stroke-width="0.5"/>
<path d="M852.6 98.18 h1.8" stroke="#ffd2a4" stroke-width="0.5"/>
<path d="M852.6 100.64 h1.8" stroke="#ffd2a4" stroke-width="0.5"/>
<path d="M852.6 103.10 h3.4" stroke="#ffd2a4" stroke-width="0.5"/>
<path d="M852.6 105.56 h1.8" stroke="#ffd2a4" stroke-width="0.5"/>
<path d="M852.6 108.02 h1.8" stroke="#ffd2a4" stroke-width="0.5"/>
<path d="M852.6 110.48 h1.8" stroke="#ffd2a4" stroke-width="0.5"/>
<path d="M852.6 112.94 h1.8" stroke="#ffd2a4" stroke-width="0.5"/>
<path d="M852.6 115.40 h3.4" stroke="#ffd2a4" stroke-width="0.5"/>
<text x="879" y="68.60" font-size="6.4" fill="#ffcf9f" text-anchor="end">1.0</text>
<text x="879" y="80.90" font-size="6.4" fill="#ffcf9f" text-anchor="end">0.5</text>
<text x="879" y="93.20" font-size="6.4" fill="#ffcf9f" text-anchor="end">0.0</text>
<text x="879" y="105.50" font-size="6.4" fill="#ffcf9f" text-anchor="end">-0.5</text>
<text x="879" y="117.80" font-size="6.4" fill="#ffcf9f" text-anchor="end">-1.0</text>
<rect x="70.00" y="134.6" width="1" height="283.6" fill="#006000"/>
<rect x="203.00" y="134.6" width="1" height="283.6" fill="#a80000"/>
<rect x="377.10" y="134.6" width="1" height="283.6" fill="#006000"/>
<rect x="382.00" y="134.6" width="1" height="283.6" fill="#a80000"/>
<rect x="396.00" y="134.6" width="1" height="283.6" fill="#006000"/>
<rect x="405.50" y="134.6" width="1" height="283.6" fill="#a80000"/>
<rect x="419.10" y="134.6" width="1" height="283.6" fill="#006000"/>
<rect x="424.00" y="134.6" width="1" height="283.6" fill="#a80000"/>
<rect x="449.70" y="134.6" width="1" height="283.6" fill="#006000"/>
<rect x="575.00" y="134.6" width="1" height="283.6" fill="#a80000"/>
<rect x="752.00" y="134.6" width="1" height="283.6" fill="#006000"/>
<path d="M18.40 256.16V293.72M20.72 289.32V314.93M23.05 305.87V317.78M27.70 289.49V315.55M30.02 314.45V328.89M43.97 300.43V307.86M48.62 296.27V308.99M50.95 307.38V311.01M53.27 308.90V318.79M64.90 286.87V307.47M67.22 304.86V313.22M69.55 307.50V313.03M78.85 280.10V291.52M83.50 262.43V267.76M88.15 257.88V265.55M92.80 262.74V270.30M97.45 245.76V255.15M109.07 214.65V223.31M111.40 217.38V226.77M116.05 196.06V209.08M120.70 196.98V212.63M125.35 205.26V217.86M127.67 215.36V226.77M132.32 212.63V219.49M134.65 218.39V232.12M136.97 230.51V235.03M146.27 204.55V211.41M148.60 208.41V221.90M150.92 218.39V223.74M169.52 165.86V185.35M171.85 158.08V182.62M178.82 166.16V179.47M181.15 175.77V182.32M185.80 164.14V179.78M188.12 174.76V183.33M192.77 169.19V179.59M195.10 178.99V191.20M197.42 189.60V207.58M199.75 203.24V207.06M202.07 201.31V220.99M204.40 217.29V229.39M211.38 213.43V232.81M220.67 218.08V226.36M225.32 219.49V229.39M227.65 226.78V235.45M229.97 232.45V249.98M236.95 222.53V232.93M239.27 228.59V236.97M246.25 216.06V232.42M248.57 229.42V240.19M250.90 232.45V244.75M253.22 231.62V241.90M255.55 238.20V248.58M257.88 246.47V253.84M260.20 240.71V254.64M264.85 243.74V256.04M267.17 252.53V258.89M271.82 250.01V258.89M278.80 241.72V249.09M283.45 240.53V252.00M290.42 244.45V254.64M292.75 252.34V259.90M299.72 248.90V265.56M304.38 244.34V258.97M306.70 256.67V262.83M309.02 260.21V264.55M313.67 253.95V262.01M316.00 260.21V270.61M322.97 258.48V265.86M327.62 263.24V268.59M332.27 252.63V263.84M339.25 248.90V257.77M346.22 261.22V271.80M348.55 266.27V277.68M353.20 263.24V272.81M355.52 266.57V273.94M357.85 266.39V282.91M364.82 272.33V280.00M367.15 278.39V286.77M381.10 266.27V279.70M385.75 273.64V277.98M388.07 274.47V280.71M399.70 261.46V268.84M402.02 264.49V272.06M404.35 268.05V273.38M406.67 271.78V278.43M411.32 271.39V285.89M413.65 282.89V294.28M422.95 241.26V272.37M425.27 270.77V307.93M429.92 267.74V297.83M434.57 282.89V291.56M436.90 287.55V299.85M441.55 280.36V295.81M443.87 291.47V297.83M453.17 247.32V263.97M455.50 260.66V267.71M476.42 204.44V219.08M481.07 200.40V218.59M485.72 209.32V220.61M488.05 211.73V231.72M492.70 215.07V223.43M495.02 215.77V226.67M499.67 212.23V230.89M504.32 208.48V215.04M513.62 189.81V196.36M518.27 180.02V191.31M525.25 184.45V195.84M527.58 186.78V198.38M529.90 187.27V191.51M532.22 188.10V205.45M536.88 188.28V194.64M539.20 182.22V197.55M541.52 192.14V210.51M546.17 202.42V211.69M548.50 207.29V218.38M550.83 217.28V224.65M560.12 193.94V200.60M564.77 188.39V193.41M571.75 182.12V191.70M574.08 184.14V194.73M576.40 192.93V213.92M581.05 206.06V213.43M583.38 209.39V218.48M585.70 213.25V220.51M588.02 215.45V220.99M592.67 209.39V220.99M595.00 216.28V220.81M597.33 217.68V227.58M604.30 209.39V217.26M606.62 214.96V223.54M608.95 221.32V225.94M611.27 222.74V234.65M613.60 230.43V238.69M620.58 225.56V238.69M622.90 231.62V237.47M625.23 234.47V246.25M627.55 243.95V259.90M632.20 249.80V257.76M636.85 251.82V261.71M643.83 248.61V256.87M648.48 244.57V257.88M650.80 252.53V268.28M655.45 241.72V253.13M657.77 251.52V257.05M660.10 250.81V259.19M662.42 260.15V288.43M664.75 282.19V294.49M669.40 275.00V284.39M674.05 275.61V290.84M676.38 281.59V297.93M678.70 284.39V297.91M681.02 291.03V320.20M685.67 310.93V330.30M692.65 298.81V305.54M694.98 300.71V317.97M697.30 310.10V329.29M701.95 309.09V325.74M704.27 323.44V343.73M706.60 343.13V360.61M713.58 334.34V347.47M718.23 336.57V354.85M720.55 350.51V361.10M722.88 353.54V364.65M727.52 342.42V357.06M729.85 354.06V382.62M734.50 357.58V379.98M736.83 377.48V385.86M743.80 359.11V378.79M748.45 319.70V332.12M755.42 310.61V322.73M764.73 302.74V319.70M774.02 277.27V296.95M776.35 293.95V305.35M781.00 301.52V315.45M799.60 278.80V287.37M804.25 274.24V282.62M806.58 275.07V293.61M808.90 286.36V295.24M811.23 293.64V303.72M813.55 297.17V307.58M820.52 279.29V291.41" stroke="#e8641c" stroke-width="0.6" fill="none"/>
<path d="M17.45 269.29h1.9v22.22h-1.9zM19.77 291.52h1.9v21.21h-1.9zM22.10 306.67h1.9v7.07h-1.9zM26.75 304.65h1.9v10.10h-1.9zM29.07 314.75h1.9v8.08h-1.9zM43.02 302.63h1.9v3.03h-1.9zM47.67 296.57h1.9v12.12h-1.9zM50.00 307.68h1.9v3.03h-1.9zM52.32 309.70h1.9v5.05h-1.9zM63.95 295.56h1.9v11.11h-1.9zM66.27 305.66h1.9v6.06h-1.9zM68.60 309.70h1.9v3.03h-1.9zM77.90 280.40h1.9v5.05h-1.9zM82.55 263.23h1.9v3.03h-1.9zM87.20 258.18h1.9v7.07h-1.9zM91.85 264.24h1.9v2.02h-1.9zM96.50 246.06h1.9v3.03h-1.9zM108.12 219.70h1.9v1.41h-1.9zM110.45 217.68h1.9v5.05h-1.9zM115.10 198.08h1.9v9.49h-1.9zM119.75 198.48h1.9v7.07h-1.9zM124.40 205.56h1.9v10.10h-1.9zM126.72 215.66h1.9v7.07h-1.9zM131.37 215.66h1.9v3.03h-1.9zM133.70 218.69h1.9v13.13h-1.9zM136.02 230.81h1.9v2.02h-1.9zM145.32 207.58h1.9v3.03h-1.9zM147.65 210.61h1.9v9.09h-1.9zM149.97 218.69h1.9v2.02h-1.9zM168.57 166.16h1.9v16.16h-1.9zM170.90 169.19h1.9v13.13h-1.9zM177.87 170.20h1.9v7.07h-1.9zM180.20 177.27h1.9v2.02h-1.9zM184.85 175.25h1.9v3.03h-1.9zM187.18 176.26h1.9v3.03h-1.9zM191.82 176.26h1.9v3.03h-1.9zM194.15 179.29h1.9v11.11h-1.9zM196.47 190.40h1.9v14.14h-1.9zM198.80 203.54h1.9v2.02h-1.9zM201.12 205.35h1.9v14.14h-1.9zM203.45 219.49h1.9v9.09h-1.9zM210.43 219.49h1.9v11.11h-1.9zM219.72 219.49h1.9v6.06h-1.9zM224.37 222.53h1.9v6.06h-1.9zM226.70 227.58h1.9v7.07h-1.9zM229.02 234.65h1.9v13.13h-1.9zM236.00 230.61h1.9v2.02h-1.9zM238.32 232.63h1.9v4.04h-1.9zM245.30 221.52h1.9v10.10h-1.9zM247.62 231.62h1.9v7.07h-1.9zM249.95 234.65h1.9v5.05h-1.9zM252.27 236.67h1.9v3.03h-1.9zM254.60 239.70h1.9v8.08h-1.9zM256.93 246.77h1.9v3.03h-1.9zM259.25 247.78h1.9v6.06h-1.9zM263.90 247.78h1.9v6.06h-1.9zM266.22 252.83h1.9v3.03h-1.9zM270.87 250.81h1.9v4.04h-1.9zM277.85 245.76h1.9v3.03h-1.9zM282.50 242.73h1.9v7.07h-1.9zM289.47 244.75h1.9v9.09h-1.9zM291.80 253.84h1.9v3.03h-1.9zM298.77 250.40h1.9v11.11h-1.9zM303.43 253.43h1.9v4.04h-1.9zM305.75 257.47h1.9v5.05h-1.9zM308.07 260.51h1.9v3.03h-1.9zM312.72 255.45h1.9v5.05h-1.9zM315.05 260.51h1.9v7.07h-1.9zM322.02 260.51h1.9v5.05h-1.9zM326.67 263.54h1.9v2.02h-1.9zM331.32 253.43h1.9v10.10h-1.9zM338.30 250.40h1.9v7.07h-1.9zM345.27 261.52h1.9v8.08h-1.9zM347.60 266.57h1.9v4.04h-1.9zM352.25 263.54h1.9v7.07h-1.9zM354.57 268.59h1.9v5.05h-1.9zM356.90 268.59h1.9v12.12h-1.9zM363.88 272.63h1.9v7.07h-1.9zM366.20 278.69h1.9v6.06h-1.9zM380.15 266.57h1.9v10.10h-1.9zM384.80 275.66h1.9v2.02h-1.9zM387.12 276.67h1.9v2.02h-1.9zM398.75 265.51h1.9v3.03h-1.9zM401.07 267.53h1.9v3.03h-1.9zM403.40 269.55h1.9v3.03h-1.9zM405.72 272.58h1.9v5.05h-1.9zM410.38 273.59h1.9v10.10h-1.9zM412.70 283.69h1.9v9.09h-1.9zM422.00 256.41h1.9v15.15h-1.9zM424.32 271.57h1.9v32.32h-1.9zM428.97 268.54h1.9v26.26h-1.9zM433.62 283.69h1.9v7.07h-1.9zM435.95 289.75h1.9v4.04h-1.9zM440.60 280.66h1.9v12.12h-1.9zM442.92 291.77h1.9v3.03h-1.9zM452.22 257.42h1.9v5.05h-1.9zM454.55 261.46h1.9v4.04h-1.9zM475.47 213.54h1.9v4.04h-1.9zM480.12 209.49h1.9v4.04h-1.9zM484.77 211.52h1.9v3.03h-1.9zM487.10 212.53h1.9v17.17h-1.9zM491.75 216.57h1.9v6.06h-1.9zM494.07 216.57h1.9v8.08h-1.9zM498.72 212.53h1.9v16.16h-1.9zM503.38 211.52h1.9v2.02h-1.9zM512.67 191.31h1.9v2.02h-1.9zM517.32 182.22h1.9v3.03h-1.9zM524.30 185.25h1.9v9.09h-1.9zM526.62 188.28h1.9v8.08h-1.9zM528.95 189.29h1.9v1.41h-1.9zM531.27 190.30h1.9v8.08h-1.9zM535.92 190.30h1.9v4.04h-1.9zM538.25 192.32h1.9v3.03h-1.9zM540.57 194.34h1.9v14.14h-1.9zM545.22 205.45h1.9v4.04h-1.9zM547.55 209.49h1.9v8.08h-1.9zM549.88 217.58h1.9v3.03h-1.9zM559.17 194.24h1.9v6.06h-1.9zM563.82 189.19h1.9v2.02h-1.9zM570.80 187.17h1.9v3.03h-1.9zM573.12 188.18h1.9v5.05h-1.9zM575.45 193.23h1.9v19.19h-1.9zM580.10 206.36h1.9v5.05h-1.9zM582.42 211.41h1.9v3.03h-1.9zM584.75 215.45h1.9v3.03h-1.9zM587.07 217.47h1.9v2.02h-1.9zM591.72 212.42h1.9v7.07h-1.9zM594.05 218.48h1.9v2.02h-1.9zM596.38 218.48h1.9v7.07h-1.9zM603.35 211.41h1.9v5.05h-1.9zM605.67 216.46h1.9v6.06h-1.9zM608.00 222.12h1.9v1.62h-1.9zM610.32 223.54h1.9v9.09h-1.9zM612.65 232.63h1.9v3.03h-1.9zM619.62 229.60h1.9v6.06h-1.9zM621.95 234.65h1.9v2.02h-1.9zM624.27 236.67h1.9v8.08h-1.9zM626.60 244.75h1.9v12.12h-1.9zM631.25 254.85h1.9v1.41h-1.9zM635.90 254.85h1.9v6.06h-1.9zM642.88 250.81h1.9v2.02h-1.9zM647.52 246.77h1.9v6.06h-1.9zM649.85 252.83h1.9v15.15h-1.9zM654.50 243.74h1.9v9.09h-1.9zM656.82 251.82h1.9v3.03h-1.9zM659.15 254.85h1.9v4.04h-1.9zM661.47 265.20h1.9v20.20h-1.9zM663.80 284.39h1.9v2.02h-1.9zM668.45 275.30h1.9v6.06h-1.9zM673.10 275.91h1.9v12.73h-1.9zM675.42 283.79h1.9v9.29h-1.9zM677.75 293.69h1.9v2.02h-1.9zM680.07 292.53h1.9v22.63h-1.9zM684.72 313.13h1.9v13.13h-1.9zM691.70 301.01h1.9v3.03h-1.9zM694.02 301.01h1.9v16.16h-1.9zM696.35 316.16h1.9v3.03h-1.9zM701.00 311.11h1.9v13.13h-1.9zM703.32 324.24h1.9v19.19h-1.9zM705.65 343.43h1.9v8.08h-1.9zM712.62 341.41h1.9v2.02h-1.9zM717.27 337.37h1.9v17.17h-1.9zM719.60 354.55h1.9v5.05h-1.9zM721.92 359.60h1.9v2.02h-1.9zM726.57 352.53h1.9v3.03h-1.9zM728.90 355.56h1.9v26.26h-1.9zM733.55 373.74h1.9v4.04h-1.9zM735.88 377.78h1.9v1.41h-1.9zM742.85 360.61h1.9v4.04h-1.9zM747.50 329.80h1.9v2.02h-1.9zM754.47 315.66h1.9v2.02h-1.9zM763.77 303.54h1.9v5.05h-1.9zM773.07 289.39h1.9v6.06h-1.9zM775.40 295.45h1.9v9.09h-1.9zM780.05 303.54h1.9v11.11h-1.9zM798.65 280.30h1.9v1.21h-1.9zM803.30 276.26h1.9v6.06h-1.9zM805.62 277.27h1.9v14.14h-1.9zM807.95 291.41h1.9v3.03h-1.9zM810.27 294.44h1.9v7.07h-1.9zM812.60 297.47h1.9v5.05h-1.9zM819.57 284.34h1.9v3.03h-1.9z" fill="#ff6e1e"/>
<path d="M25.37 303.85V304.65M25.37 312.73V314.93M32.35 315.58V317.78M32.35 322.83V328.89M34.67 307.68V316.77M34.67 322.83V329.90M37.00 308.20V309.70M37.00 316.77V330.91M39.32 303.85V304.65M39.32 309.70V315.76M41.65 302.33V302.63M41.65 308.69V308.99M46.30 292.93V296.97M46.30 304.65V305.45M55.60 309.30V310.10M55.60 314.75V318.79M57.92 305.76V306.06M57.92 310.71V312.91M60.25 298.50V300.00M60.25 306.67V310.71M62.57 292.93V295.96M62.57 300.61V302.81M71.87 296.97V301.01M71.87 310.71V311.01M74.20 285.27V287.47M74.20 289.49V293.54M76.52 279.31V280.81M76.52 287.47V289.67M81.17 262.14V263.64M81.17 285.45V286.95M85.82 258.29V258.59M85.82 264.24V270.30M90.47 261.64V263.84M90.47 265.25V265.55M95.12 244.26V246.46M95.12 265.25V265.55M99.77 243.64V243.94M99.77 250.00V250.80M102.10 227.99V228.79M102.10 243.94V244.24M104.42 219.52V221.72M104.42 228.79V230.99M106.75 208.59V219.70M106.75 221.72V223.92M113.72 206.78V207.58M113.72 220.71V222.21M118.38 194.04V198.48M118.38 211.62V211.92M123.02 199.49V204.55M123.02 206.97V208.47M130.00 210.61V215.66M130.00 222.73V223.53M139.30 225.58V227.78M139.30 231.82V235.86M141.62 216.88V217.68M141.62 228.79V229.59M143.95 205.38V207.58M143.95 217.68V218.48M153.25 210.43V212.63M153.25 220.71V222.91M155.57 200.72V201.52M155.57 212.63V212.93M157.90 197.99V199.49M157.90 201.52V208.59M160.22 185.87V187.37M160.22 199.49V208.59M162.55 185.05V185.35M162.55 187.37V188.17M164.88 160.10V169.19M164.88 182.32V183.12M167.20 161.11V166.16M167.20 169.19V171.39M174.17 167.17V176.26M174.17 182.32V183.12M176.50 174.45V175.25M176.50 177.27V189.39M183.47 173.94V174.24M183.47 179.29V182.32M190.45 173.05V175.25M190.45 179.29V179.59M206.72 221.34V223.54M206.72 228.59V239.70M209.05 213.43V219.49M209.05 228.59V229.39M213.70 227.79V228.59M213.70 232.63V239.70M216.02 224.76V225.56M216.02 229.60V236.67M218.35 219.49V221.52M218.35 226.57V228.07M223.00 221.73V222.53M223.00 226.57V234.65M232.30 245.46V245.76M232.30 248.79V256.87M234.62 228.41V230.61M234.62 245.76V246.06M241.60 230.31V230.61M241.60 236.67V238.69M243.92 216.87V221.52M243.92 231.62V233.12M262.52 246.98V247.78M262.52 252.83V262.93M269.50 245.76V249.80M269.50 255.86V257.36M274.15 241.72V248.79M274.15 251.82V252.62M276.47 245.46V245.76M276.47 249.19V254.85M281.12 234.65V242.73M281.12 248.79V250.29M285.77 246.98V247.78M285.77 249.80V256.87M288.10 239.70V244.75M288.10 248.79V249.09M295.07 251.33V252.83M295.07 257.27V258.07M297.40 247.78V250.81M297.40 253.23V253.53M302.05 252.63V253.43M302.05 261.52V263.72M311.35 253.43V255.45M311.35 262.53V264.73M318.32 259.49V264.55M318.32 267.58V269.60M320.65 258.48V260.51M320.65 265.56V265.86M325.30 261.34V263.54M325.30 267.58V270.61M329.95 251.93V253.43M329.95 265.56V267.06M334.60 251.11V251.41M334.60 263.54V265.56M336.92 247.37V250.40M336.92 252.42V254.62M341.57 256.67V257.47M341.57 262.53V264.55M343.90 256.98V258.48M343.90 261.52V263.02M350.87 259.49V262.53M350.87 270.61V272.81M360.17 277.38V277.68M360.17 281.72V284.75M362.50 270.61V272.63M362.50 278.69V278.99M369.47 280.22V281.72M369.47 284.75V288.79M371.80 273.46V275.66M371.80 281.72V283.22M374.12 264.37V266.57M374.12 276.67V278.87M376.45 266.39V268.59M376.45 273.64V275.84M378.77 265.56V267.58M378.77 272.63V272.93M383.42 274.16V275.66M383.42 278.69V280.71M390.40 274.35V274.65M390.40 278.69V279.49M392.72 267.58V269.60M392.72 275.66V275.96M395.05 264.55V266.57M395.05 270.61V272.81M397.37 264.32V266.52M397.37 273.59V275.09M409.00 271.08V272.58M409.00 276.62V279.65M415.97 289.57V291.77M415.97 293.79V296.82M418.30 276.13V277.63M418.30 292.78V293.58M420.62 252.37V256.41M420.62 279.65V281.85M427.60 266.34V268.54M427.60 303.89V307.93M432.25 282.19V283.69M432.25 294.80V295.60M439.22 278.64V280.66M439.22 293.79V295.29M446.20 287.24V288.74M446.20 294.80V295.60M448.52 272.28V272.58M448.52 288.74V290.94M450.85 250.35V257.42M450.85 272.58V274.78M457.82 252.37V253.38M457.82 265.51V267.71M460.15 256.23V258.43M460.15 263.48V264.98M462.47 254.21V256.41M462.47 260.45V261.95M464.80 245.00V245.30M464.80 257.42V257.72M467.12 227.19V228.69M467.12 246.87V247.17M469.45 208.48V218.59M469.45 228.69V230.19M471.77 208.48V213.54M471.77 218.59V224.65M474.10 212.04V213.54M474.10 218.59V224.65M478.75 207.47V209.49M478.75 218.59V218.89M483.40 207.68V208.48M483.40 214.55V216.75M490.38 216.27V216.57M490.38 229.70V231.72M497.35 210.51V212.53M497.35 224.65V224.95M502.00 211.22V211.52M502.00 228.69V232.73M506.65 212.63V212.93M506.65 214.55V216.57M508.97 203.64V204.44M508.97 213.54V214.34M511.30 188.28V192.32M511.30 205.45V207.65M515.95 180.41V181.21M515.95 191.31V191.61M520.60 177.17V184.24M520.60 186.26V186.56M522.92 174.14V183.84M522.92 185.25V186.05M534.55 190.51V191.31M534.55 198.38V200.40M543.85 204.65V205.45M543.85 208.48V214.55M553.15 207.47V210.51M553.15 220.61V222.81M555.47 202.84V204.34M555.47 210.40V212.60M557.80 192.74V194.24M557.80 203.33V204.13M562.45 188.39V189.19M562.45 200.30V202.32M567.10 184.14V187.17M567.10 190.20V190.50M569.42 181.11V186.16M569.42 189.19V190.69M578.73 203.33V206.36M578.73 212.42V212.72M590.35 208.38V212.42M590.35 219.49V221.69M599.65 217.17V217.47M599.65 225.56V227.76M601.98 208.38V210.40M601.98 217.47V217.77M615.92 229.60V231.62M615.92 235.66V237.86M618.25 226.57V229.60M618.25 232.63V232.93M629.88 253.35V254.85M629.88 257.88V264.95M634.52 252.65V254.85M634.52 256.87V260.91M639.17 254.36V255.86M639.17 260.91V261.71M641.50 249.31V250.81M641.50 256.87V258.89M646.15 241.72V246.77M646.15 252.83V253.63M653.12 241.72V243.74M653.12 267.98V270.18M667.08 269.24V275.30M667.08 284.39V287.42M671.73 265.40V275.91M671.73 281.77V282.57M683.35 311.32V312.12M683.35 315.15V317.35M688.00 311.11V314.14M688.00 326.26V327.06M690.33 299.51V301.01M690.33 314.14V316.34M699.62 308.91V311.11M699.62 320.20V320.50M708.92 336.36V341.41M708.92 351.52V352.32M711.25 337.37V341.41M711.25 343.43V349.49M715.90 329.29V337.37M715.90 343.43V344.23M725.20 348.48V353.54M725.20 361.62V367.68M732.17 368.69V373.74M732.17 381.82V393.94M739.15 366.49V368.69M739.15 378.79V380.81M741.48 350.51V360.61M741.48 368.69V368.99M746.12 329.50V330.30M746.12 364.65V366.85M750.77 320.71V326.77M750.77 332.83V338.89M753.10 313.46V315.66M753.10 326.77V328.97M757.75 300.51V311.62M757.75 317.68V318.48M760.08 305.56V309.60M760.08 311.62V312.42M762.40 302.74V303.54M762.40 309.60V310.40M767.05 291.62V292.42M767.05 308.59V310.09M769.38 288.38V290.40M769.38 292.42V297.47M771.70 285.35V289.39M771.70 291.41V292.21M778.67 294.65V295.45M778.67 304.55V309.60M783.33 303.54V308.59M783.33 315.66V316.67M785.65 307.28V307.58M785.65 309.60V316.67M787.98 302.74V303.54M787.98 308.59V316.67M790.30 297.68V298.48M790.30 303.54V307.58M792.62 285.35V292.42M792.62 298.48V299.28M794.95 286.06V286.36M794.95 292.42V297.47M797.27 274.24V280.30M797.27 286.36V292.42M801.92 272.22V278.28M801.92 281.31V283.51M815.88 298.18V298.48M815.88 302.53V304.55M818.20 281.31V284.34M818.20 298.48V299.28M822.85 280.82V282.32M822.85 287.37V290.40M825.17 281.31V283.33M825.17 285.35V292.42M827.50 264.14V264.14M827.50 282.32V282.32" stroke="#8fa4c4" stroke-width="0.55" fill="none"/>
<path d="M24.42 304.65h1.9v8.08h-1.9zM31.40 317.78h1.9v5.05h-1.9zM33.72 316.77h1.9v6.06h-1.9zM36.05 309.70h1.9v7.07h-1.9zM38.37 304.65h1.9v5.05h-1.9zM40.70 302.63h1.9v6.06h-1.9zM45.35 296.97h1.9v7.68h-1.9zM54.65 310.10h1.9v4.65h-1.9zM56.97 306.06h1.9v4.65h-1.9zM59.30 300.00h1.9v6.67h-1.9zM61.62 295.96h1.9v4.65h-1.9zM70.92 301.01h1.9v9.70h-1.9zM73.25 287.47h1.9v2.02h-1.9zM75.57 280.81h1.9v6.67h-1.9zM80.22 263.64h1.9v21.82h-1.9zM84.87 258.59h1.9v5.66h-1.9zM89.52 263.84h1.9v1.41h-1.9zM94.17 246.46h1.9v18.79h-1.9zM98.82 243.94h1.9v6.06h-1.9zM101.15 228.79h1.9v15.15h-1.9zM103.47 221.72h1.9v7.07h-1.9zM105.80 219.70h1.9v2.02h-1.9zM112.77 207.58h1.9v13.13h-1.9zM117.42 198.48h1.9v13.13h-1.9zM122.07 204.55h1.9v2.42h-1.9zM129.05 215.66h1.9v7.07h-1.9zM138.35 227.78h1.9v4.04h-1.9zM140.68 217.68h1.9v11.11h-1.9zM143.00 207.58h1.9v10.10h-1.9zM152.30 212.63h1.9v8.08h-1.9zM154.62 201.52h1.9v11.11h-1.9zM156.95 199.49h1.9v2.02h-1.9zM159.27 187.37h1.9v12.12h-1.9zM161.60 185.35h1.9v2.02h-1.9zM163.93 169.19h1.9v13.13h-1.9zM166.25 166.16h1.9v3.03h-1.9zM173.22 176.26h1.9v6.06h-1.9zM175.55 175.25h1.9v2.02h-1.9zM182.52 174.24h1.9v5.05h-1.9zM189.50 175.25h1.9v4.04h-1.9zM205.77 223.54h1.9v5.05h-1.9zM208.10 219.49h1.9v9.09h-1.9zM212.75 228.59h1.9v4.04h-1.9zM215.07 225.56h1.9v4.04h-1.9zM217.40 221.52h1.9v5.05h-1.9zM222.05 222.53h1.9v4.04h-1.9zM231.35 245.76h1.9v3.03h-1.9zM233.68 230.61h1.9v15.15h-1.9zM240.65 230.61h1.9v6.06h-1.9zM242.97 221.52h1.9v10.10h-1.9zM261.57 247.78h1.9v5.05h-1.9zM268.55 249.80h1.9v6.06h-1.9zM273.20 248.79h1.9v3.03h-1.9zM275.52 245.76h1.9v3.43h-1.9zM280.18 242.73h1.9v6.06h-1.9zM284.82 247.78h1.9v2.02h-1.9zM287.15 244.75h1.9v4.04h-1.9zM294.12 252.83h1.9v4.44h-1.9zM296.45 250.81h1.9v2.42h-1.9zM301.10 253.43h1.9v8.08h-1.9zM310.40 255.45h1.9v7.07h-1.9zM317.38 264.55h1.9v3.03h-1.9zM319.70 260.51h1.9v5.05h-1.9zM324.35 263.54h1.9v4.04h-1.9zM329.00 253.43h1.9v12.12h-1.9zM333.65 251.41h1.9v12.12h-1.9zM335.97 250.40h1.9v2.02h-1.9zM340.62 257.47h1.9v5.05h-1.9zM342.95 258.48h1.9v3.03h-1.9zM349.92 262.53h1.9v8.08h-1.9zM359.22 277.68h1.9v4.04h-1.9zM361.55 272.63h1.9v6.06h-1.9zM368.52 281.72h1.9v3.03h-1.9zM370.85 275.66h1.9v6.06h-1.9zM373.17 266.57h1.9v10.10h-1.9zM375.50 268.59h1.9v5.05h-1.9zM377.82 267.58h1.9v5.05h-1.9zM382.47 275.66h1.9v3.03h-1.9zM389.45 274.65h1.9v4.04h-1.9zM391.77 269.60h1.9v6.06h-1.9zM394.10 266.57h1.9v4.04h-1.9zM396.42 266.52h1.9v7.07h-1.9zM408.05 272.58h1.9v4.04h-1.9zM415.02 291.77h1.9v2.02h-1.9zM417.35 277.63h1.9v15.15h-1.9zM419.67 256.41h1.9v23.23h-1.9zM426.65 268.54h1.9v35.35h-1.9zM431.30 283.69h1.9v11.11h-1.9zM438.27 280.66h1.9v13.13h-1.9zM445.25 288.74h1.9v6.06h-1.9zM447.57 272.58h1.9v16.16h-1.9zM449.90 257.42h1.9v15.15h-1.9zM456.88 253.38h1.9v12.12h-1.9zM459.20 258.43h1.9v5.05h-1.9zM461.52 256.41h1.9v4.04h-1.9zM463.85 245.30h1.9v12.12h-1.9zM466.18 228.69h1.9v18.18h-1.9zM468.50 218.59h1.9v10.10h-1.9zM470.82 213.54h1.9v5.05h-1.9zM473.15 213.54h1.9v5.05h-1.9zM477.80 209.49h1.9v9.09h-1.9zM482.45 208.48h1.9v6.06h-1.9zM489.43 216.57h1.9v13.13h-1.9zM496.40 212.53h1.9v12.12h-1.9zM501.05 211.52h1.9v17.17h-1.9zM505.70 212.93h1.9v1.62h-1.9zM508.02 204.44h1.9v9.09h-1.9zM510.35 192.32h1.9v13.13h-1.9zM515.00 181.21h1.9v10.10h-1.9zM519.65 184.24h1.9v2.02h-1.9zM521.97 183.84h1.9v1.41h-1.9zM533.60 191.31h1.9v7.07h-1.9zM542.90 205.45h1.9v3.03h-1.9zM552.20 210.51h1.9v10.10h-1.9zM554.52 204.34h1.9v6.06h-1.9zM556.85 194.24h1.9v9.09h-1.9zM561.50 189.19h1.9v11.11h-1.9zM566.15 187.17h1.9v3.03h-1.9zM568.47 186.16h1.9v3.03h-1.9zM577.77 206.36h1.9v6.06h-1.9zM589.40 212.42h1.9v7.07h-1.9zM598.70 217.47h1.9v8.08h-1.9zM601.02 210.40h1.9v7.07h-1.9zM614.97 231.62h1.9v4.04h-1.9zM617.30 229.60h1.9v3.03h-1.9zM628.92 254.85h1.9v3.03h-1.9zM633.57 254.85h1.9v2.02h-1.9zM638.22 255.86h1.9v5.05h-1.9zM640.55 250.81h1.9v6.06h-1.9zM645.20 246.77h1.9v6.06h-1.9zM652.17 243.74h1.9v24.24h-1.9zM666.12 275.30h1.9v9.09h-1.9zM670.77 275.91h1.9v5.86h-1.9zM682.40 312.12h1.9v3.03h-1.9zM687.05 314.14h1.9v12.12h-1.9zM689.38 301.01h1.9v13.13h-1.9zM698.67 311.11h1.9v9.09h-1.9zM707.97 341.41h1.9v10.10h-1.9zM710.30 341.41h1.9v2.02h-1.9zM714.95 337.37h1.9v6.06h-1.9zM724.25 353.54h1.9v8.08h-1.9zM731.22 373.74h1.9v8.08h-1.9zM738.20 368.69h1.9v10.10h-1.9zM740.52 360.61h1.9v8.08h-1.9zM745.17 330.30h1.9v34.34h-1.9zM749.82 326.77h1.9v6.06h-1.9zM752.15 315.66h1.9v11.11h-1.9zM756.80 311.62h1.9v6.06h-1.9zM759.12 309.60h1.9v2.02h-1.9zM761.45 303.54h1.9v6.06h-1.9zM766.10 292.42h1.9v16.16h-1.9zM768.42 290.40h1.9v2.02h-1.9zM770.75 289.39h1.9v2.02h-1.9zM777.72 295.45h1.9v9.09h-1.9zM782.38 308.59h1.9v7.07h-1.9zM784.70 307.58h1.9v2.02h-1.9zM787.02 303.54h1.9v5.05h-1.9zM789.35 298.48h1.9v5.05h-1.9zM791.67 292.42h1.9v6.06h-1.9zM794.00 286.36h1.9v6.06h-1.9zM796.32 280.30h1.9v6.06h-1.9zM800.97 278.28h1.9v3.03h-1.9zM814.92 298.48h1.9v4.04h-1.9zM817.25 284.34h1.9v14.14h-1.9zM821.90 282.32h1.9v5.05h-1.9zM824.22 283.33h1.9v2.02h-1.9zM826.55 264.14h1.9v18.18h-1.9z" fill="#020305" stroke="#9db0cf" stroke-width="0.5"/>
<path d="M20.85 417.2l4.2 4M25.50 417.2l4.2 4M30.15 417.2l4.2 4M34.80 417.2l4.2 4M39.45 417.2l4.2 4M44.10 417.2l4.2 4M48.75 417.2l4.2 4M53.40 417.2l4.2 4M58.05 417.2l4.2 4M62.70 417.2l4.2 4M67.35 417.2l4.2 4M202.20 417.2l4.2 4M206.85 417.2l4.2 4M211.50 417.2l4.2 4M216.15 417.2l4.2 4M220.80 417.2l4.2 4M225.45 417.2l4.2 4M230.10 417.2l4.2 4M234.75 417.2l4.2 4M239.40 417.2l4.2 4M244.05 417.2l4.2 4M248.70 417.2l4.2 4M253.35 417.2l4.2 4M258.00 417.2l4.2 4M262.65 417.2l4.2 4M267.30 417.2l4.2 4M271.95 417.2l4.2 4M276.60 417.2l4.2 4M281.25 417.2l4.2 4M285.90 417.2l4.2 4M290.55 417.2l4.2 4M295.20 417.2l4.2 4M299.85 417.2l4.2 4M304.50 417.2l4.2 4M309.15 417.2l4.2 4M313.80 417.2l4.2 4M318.45 417.2l4.2 4M323.10 417.2l4.2 4M327.75 417.2l4.2 4M332.40 417.2l4.2 4M337.05 417.2l4.2 4M341.70 417.2l4.2 4M346.35 417.2l4.2 4M351.00 417.2l4.2 4M355.65 417.2l4.2 4M360.30 417.2l4.2 4M364.95 417.2l4.2 4M369.60 417.2l4.2 4M374.25 417.2l4.2 4M383.55 417.2l4.2 4M388.20 417.2l4.2 4M392.85 417.2l4.2 4M406.80 417.2l4.2 4M411.45 417.2l4.2 4M416.10 417.2l4.2 4M425.40 417.2l4.2 4M430.05 417.2l4.2 4M434.70 417.2l4.2 4M439.35 417.2l4.2 4M444.00 417.2l4.2 4M574.20 417.2l4.2 4M578.85 417.2l4.2 4M583.50 417.2l4.2 4M588.15 417.2l4.2 4M592.80 417.2l4.2 4M597.45 417.2l4.2 4M602.10 417.2l4.2 4M606.75 417.2l4.2 4M611.40 417.2l4.2 4M616.05 417.2l4.2 4M620.70 417.2l4.2 4M625.35 417.2l4.2 4M630.00 417.2l4.2 4M634.65 417.2l4.2 4M639.30 417.2l4.2 4M643.95 417.2l4.2 4M648.60 417.2l4.2 4M653.25 417.2l4.2 4M657.90 417.2l4.2 4M662.55 417.2l4.2 4M667.20 417.2l4.2 4M671.85 417.2l4.2 4M676.50 417.2l4.2 4M681.15 417.2l4.2 4M685.80 417.2l4.2 4M690.45 417.2l4.2 4M695.10 417.2l4.2 4M699.75 417.2l4.2 4M704.40 417.2l4.2 4M709.05 417.2l4.2 4M713.70 417.2l4.2 4M718.35 417.2l4.2 4M723.00 417.2l4.2 4M727.65 417.2l4.2 4M732.30 417.2l4.2 4M736.95 417.2l4.2 4M741.60 417.2l4.2 4M746.25 417.2l4.2 4" stroke="#d81c1c" stroke-width="0.8" fill="none"/>
<path d="M76.40 417.2l-4.2 4M81.05 417.2l-4.2 4M85.70 417.2l-4.2 4M90.35 417.2l-4.2 4M95.00 417.2l-4.2 4M99.65 417.2l-4.2 4M104.30 417.2l-4.2 4M108.95 417.2l-4.2 4M113.60 417.2l-4.2 4M118.25 417.2l-4.2 4M122.90 417.2l-4.2 4M127.55 417.2l-4.2 4M132.20 417.2l-4.2 4M136.85 417.2l-4.2 4M141.50 417.2l-4.2 4M146.15 417.2l-4.2 4M150.80 417.2l-4.2 4M155.45 417.2l-4.2 4M160.10 417.2l-4.2 4M164.75 417.2l-4.2 4M169.40 417.2l-4.2 4M174.05 417.2l-4.2 4M178.70 417.2l-4.2 4M183.35 417.2l-4.2 4M188.00 417.2l-4.2 4M192.65 417.2l-4.2 4M197.30 417.2l-4.2 4M201.95 417.2l-4.2 4M383.30 417.2l-4.2 4M401.90 417.2l-4.2 4M406.55 417.2l-4.2 4M425.15 417.2l-4.2 4M453.05 417.2l-4.2 4M457.70 417.2l-4.2 4M462.35 417.2l-4.2 4M467.00 417.2l-4.2 4M471.65 417.2l-4.2 4M476.30 417.2l-4.2 4M480.95 417.2l-4.2 4M485.60 417.2l-4.2 4M490.25 417.2l-4.2 4M494.90 417.2l-4.2 4M499.55 417.2l-4.2 4M504.20 417.2l-4.2 4M508.85 417.2l-4.2 4M513.50 417.2l-4.2 4M518.15 417.2l-4.2 4M522.80 417.2l-4.2 4M527.45 417.2l-4.2 4M532.10 417.2l-4.2 4M536.75 417.2l-4.2 4M541.40 417.2l-4.2 4M546.05 417.2l-4.2 4M550.70 417.2l-4.2 4M555.35 417.2l-4.2 4M560.00 417.2l-4.2 4M564.65 417.2l-4.2 4M569.30 417.2l-4.2 4M573.95 417.2l-4.2 4M755.30 417.2l-4.2 4M759.95 417.2l-4.2 4M764.60 417.2l-4.2 4M769.25 417.2l-4.2 4M773.90 417.2l-4.2 4M778.55 417.2l-4.2 4M783.20 417.2l-4.2 4M787.85 417.2l-4.2 4M792.50 417.2l-4.2 4M797.15 417.2l-4.2 4M801.80 417.2l-4.2 4M806.45 417.2l-4.2 4M811.10 417.2l-4.2 4M815.75 417.2l-4.2 4M820.40 417.2l-4.2 4M825.05 417.2l-4.2 4M829.70 417.2l-4.2 4" stroke="#1c981c" stroke-width="0.8" fill="none"/>
<rect x="42" y="417" width="2.4" height="1" fill="#2020d0"/>
<rect x="135.3" y="417" width="2.4" height="1" fill="#2020d0"/>
<rect x="288.3" y="417" width="2.4" height="1" fill="#2020d0"/>
<rect x="385.8" y="417" width="2.4" height="1" fill="#2020d0"/>
<rect x="398.3" y="417" width="2.4" height="1" fill="#2020d0"/>
<rect x="410.8" y="417" width="2.4" height="1" fill="#2020d0"/>
<rect x="434.5" y="417" width="2.4" height="1" fill="#2020d0"/>
<rect x="510.3" y="417" width="2.4" height="1" fill="#2020d0"/>
<rect x="661.3" y="417" width="2.4" height="1" fill="#2020d0"/>
<rect x="789.8" y="417" width="2.4" height="1" fill="#2020d0"/>
<rect x="17" y="420.6" width="835.4" height="1" fill="#c4c4c4"/>
<rect x="16.55" y="421" width="0.7" height="10.5" fill="#d0d0d0"/>
<text x="18.30" y="429.4" font-size="6.5" fill="#f2f2f2" stroke="#f2f2f2" stroke-width="0.15">N</text>
<rect x="25.02" y="421" width="0.7" height="10.5" fill="#d0d0d0"/>
<text x="26.77" y="429.4" font-size="6.5" fill="#f2f2f2" stroke="#f2f2f2" stroke-width="0.15">D</text>
<rect x="36.65" y="421" width="0.7" height="10.5" fill="#d0d0d0"/>
<text x="38.2" y="429.4" font-size="6.5" fill="#f2f2f2" textLength="15.8" lengthAdjust="spacingAndGlyphs" stroke="#f2f2f2" stroke-width="0.15">2017</text>
<rect x="55.25" y="421" width="0.7" height="10.5" fill="#d0d0d0"/>
<rect x="66.87" y="421" width="0.7" height="10.5" fill="#d0d0d0"/>
<text x="68.62" y="429.4" font-size="6.5" fill="#f2f2f2" stroke="#f2f2f2" stroke-width="0.15">A</text>
<rect x="76.17" y="421" width="0.7" height="10.5" fill="#d0d0d0"/>
<text x="77.92" y="429.4" font-size="6.5" fill="#f2f2f2" stroke="#f2f2f2" stroke-width="0.15">M</text>
<rect x="85.47" y="421" width="0.7" height="10.5" fill="#d0d0d0"/>
<text x="87.22" y="429.4" font-size="6.5" fill="#f2f2f2" stroke="#f2f2f2" stroke-width="0.15">J</text>
<rect x="97.10" y="421" width="0.7" height="10.5" fill="#d0d0d0"/>
<text x="98.85" y="429.4" font-size="6.5" fill="#f2f2f2" stroke="#f2f2f2" stroke-width="0.15">J</text>
<rect x="106.40" y="421" width="0.7" height="10.5" fill="#d0d0d0"/>
<text x="108.15" y="429.4" font-size="6.5" fill="#f2f2f2" stroke="#f2f2f2" stroke-width="0.15">A</text>
<rect x="115.70" y="421" width="0.7" height="10.5" fill="#d0d0d0"/>
<text x="117.45" y="429.4" font-size="6.5" fill="#f2f2f2" stroke="#f2f2f2" stroke-width="0.15">S</text>
<rect x="127.32" y="421" width="0.7" height="10.5" fill="#d0d0d0"/>
<text x="129.07" y="429.4" font-size="6.5" fill="#f2f2f2" stroke="#f2f2f2" stroke-width="0.15">O</text>
<rect x="136.62" y="421" width="0.7" height="10.5" fill="#d0d0d0"/>
<text x="138.37" y="429.4" font-size="6.5" fill="#f2f2f2" stroke="#f2f2f2" stroke-width="0.15">N</text>
<rect x="145.92" y="421" width="0.7" height="10.5" fill="#d0d0d0"/>
<text x="147.67" y="429.4" font-size="6.5" fill="#f2f2f2" stroke="#f2f2f2" stroke-width="0.15">D</text>
<rect x="157.55" y="421" width="0.7" height="10.5" fill="#d0d0d0"/>
<text x="159.1" y="429.4" font-size="6.5" fill="#f2f2f2" textLength="15.8" lengthAdjust="spacingAndGlyphs" stroke="#f2f2f2" stroke-width="0.15">2018</text>
<rect x="176.15" y="421" width="0.7" height="10.5" fill="#d0d0d0"/>
<rect x="187.78" y="421" width="0.7" height="10.5" fill="#d0d0d0"/>
<text x="189.53" y="429.4" font-size="6.5" fill="#f2f2f2" stroke="#f2f2f2" stroke-width="0.15">A</text>
<rect x="197.07" y="421" width="0.7" height="10.5" fill="#d0d0d0"/>
<text x="198.82" y="429.4" font-size="6.5" fill="#f2f2f2" stroke="#f2f2f2" stroke-width="0.15">M</text>
<rect x="206.37" y="421" width="0.7" height="10.5" fill="#d0d0d0"/>
<text x="208.12" y="429.4" font-size="6.5" fill="#f2f2f2" stroke="#f2f2f2" stroke-width="0.15">J</text>
<rect x="218.00" y="421" width="0.7" height="10.5" fill="#d0d0d0"/>
<text x="219.75" y="429.4" font-size="6.5" fill="#f2f2f2" stroke="#f2f2f2" stroke-width="0.15">J</text>
<rect x="227.30" y="421" width="0.7" height="10.5" fill="#d0d0d0"/>
<text x="229.05" y="429.4" font-size="6.5" fill="#f2f2f2" stroke="#f2f2f2" stroke-width="0.15">A</text>
<rect x="238.92" y="421" width="0.7" height="10.5" fill="#d0d0d0"/>
<text x="240.67" y="429.4" font-size="6.5" fill="#f2f2f2" stroke="#f2f2f2" stroke-width="0.15">S</text>
<rect x="248.22" y="421" width="0.7" height="10.5" fill="#d0d0d0"/>
<text x="249.97" y="429.4" font-size="6.5" fill="#f2f2f2" stroke="#f2f2f2" stroke-width="0.15">O</text>
<rect x="257.52" y="421" width="0.7" height="10.5" fill="#d0d0d0"/>
<text x="259.27" y="429.4" font-size="6.5" fill="#f2f2f2" stroke="#f2f2f2" stroke-width="0.15">N</text>
<rect x="269.15" y="421" width="0.7" height="10.5" fill="#d0d0d0"/>
<text x="270.90" y="429.4" font-size="6.5" fill="#f2f2f2" stroke="#f2f2f2" stroke-width="0.15">D</text>
<rect x="278.45" y="421" width="0.7" height="10.5" fill="#d0d0d0"/>
<text x="280.0" y="429.4" font-size="6.5" fill="#f2f2f2" textLength="15.8" lengthAdjust="spacingAndGlyphs" stroke="#f2f2f2" stroke-width="0.15">2019</text>
<rect x="297.05" y="421" width="0.7" height="10.5" fill="#d0d0d0"/>
<rect x="308.67" y="421" width="0.7" height="10.5" fill="#d0d0d0"/>
<text x="310.42" y="429.4" font-size="6.5" fill="#f2f2f2" stroke="#f2f2f2" stroke-width="0.15">A</text>
<rect x="317.97" y="421" width="0.7" height="10.5" fill="#d0d0d0"/>
<text x="319.72" y="429.4" font-size="6.5" fill="#f2f2f2" stroke="#f2f2f2" stroke-width="0.15">M</text>
<rect x="329.60" y="421" width="0.7" height="10.5" fill="#d0d0d0"/>
<text x="331.35" y="429.4" font-size="6.5" fill="#f2f2f2" stroke="#f2f2f2" stroke-width="0.15">J</text>
<rect x="338.90" y="421" width="0.7" height="10.5" fill="#d0d0d0"/>
<text x="340.65" y="429.4" font-size="6.5" fill="#f2f2f2" stroke="#f2f2f2" stroke-width="0.15">J</text>
<rect x="348.20" y="421" width="0.7" height="10.5" fill="#d0d0d0"/>
<text x="349.95" y="429.4" font-size="6.5" fill="#f2f2f2" stroke="#f2f2f2" stroke-width="0.15">A</text>
<rect x="359.82" y="421" width="0.7" height="10.5" fill="#d0d0d0"/>
<text x="361.57" y="429.4" font-size="6.5" fill="#f2f2f2" stroke="#f2f2f2" stroke-width="0.15">S</text>
<rect x="369.12" y="421" width="0.7" height="10.5" fill="#d0d0d0"/>
<text x="370.87" y="429.4" font-size="6.5" fill="#f2f2f2" stroke="#f2f2f2" stroke-width="0.15">O</text>
<rect x="378.42" y="421" width="0.7" height="10.5" fill="#d0d0d0"/>
<text x="380.17" y="429.4" font-size="6.5" fill="#f2f2f2" stroke="#f2f2f2" stroke-width="0.15">N</text>
<rect x="390.05" y="421" width="0.7" height="10.5" fill="#d0d0d0"/>
<text x="391.80" y="429.4" font-size="6.5" fill="#f2f2f2" stroke="#f2f2f2" stroke-width="0.15">D</text>
<rect x="399.35" y="421" width="0.7" height="10.5" fill="#d0d0d0"/>
<text x="400.9" y="429.4" font-size="6.5" fill="#f2f2f2" textLength="15.8" lengthAdjust="spacingAndGlyphs" stroke="#f2f2f2" stroke-width="0.15">2020</text>
<rect x="420.27" y="421" width="0.7" height="10.5" fill="#d0d0d0"/>
<text x="422.02" y="429.4" font-size="6.5" fill="#f2f2f2" stroke="#f2f2f2" stroke-width="0.15">M</text>
<rect x="429.57" y="421" width="0.7" height="10.5" fill="#d0d0d0"/>
<text x="431.32" y="429.4" font-size="6.5" fill="#f2f2f2" stroke="#f2f2f2" stroke-width="0.15">A</text>
<rect x="438.87" y="421" width="0.7" height="10.5" fill="#d0d0d0"/>
<text x="440.62" y="429.4" font-size="6.5" fill="#f2f2f2" stroke="#f2f2f2" stroke-width="0.15">M</text>
<rect x="450.50" y="421" width="0.7" height="10.5" fill="#d0d0d0"/>
<text x="452.25" y="429.4" font-size="6.5" fill="#f2f2f2" stroke="#f2f2f2" stroke-width="0.15">J</text>
<rect x="459.80" y="421" width="0.7" height="10.5" fill="#d0d0d0"/>
<text x="461.55" y="429.4" font-size="6.5" fill="#f2f2f2" stroke="#f2f2f2" stroke-width="0.15">J</text>
<rect x="471.42" y="421" width="0.7" height="10.5" fill="#d0d0d0"/>
<text x="473.17" y="429.4" font-size="6.5" fill="#f2f2f2" stroke="#f2f2f2" stroke-width="0.15">A</text>
<rect x="480.72" y="421" width="0.7" height="10.5" fill="#d0d0d0"/>
<text x="482.47" y="429.4" font-size="6.5" fill="#f2f2f2" stroke="#f2f2f2" stroke-width="0.15">S</text>
<rect x="490.02" y="421" width="0.7" height="10.5" fill="#d0d0d0"/>
<text x="491.77" y="429.4" font-size="6.5" fill="#f2f2f2" stroke="#f2f2f2" stroke-width="0.15">O</text>
<rect x="501.65" y="421" width="0.7" height="10.5" fill="#d0d0d0"/>
<text x="503.40" y="429.4" font-size="6.5" fill="#f2f2f2" stroke="#f2f2f2" stroke-width="0.15">N</text>
<rect x="510.95" y="421" width="0.7" height="10.5" fill="#d0d0d0"/>
<text x="512.70" y="429.4" font-size="6.5" fill="#f2f2f2" stroke="#f2f2f2" stroke-width="0.15">D</text>
<rect x="520.25" y="421" width="0.7" height="10.5" fill="#d0d0d0"/>
<text x="521.8" y="429.4" font-size="6.5" fill="#f2f2f2" textLength="15.8" lengthAdjust="spacingAndGlyphs" stroke="#f2f2f2" stroke-width="0.15">2021</text>
<rect x="541.17" y="421" width="0.7" height="10.5" fill="#d0d0d0"/>
<text x="542.92" y="429.4" font-size="6.5" fill="#f2f2f2" stroke="#f2f2f2" stroke-width="0.15">M</text>
<rect x="550.48" y="421" width="0.7" height="10.5" fill="#d0d0d0"/>
<text x="552.23" y="429.4" font-size="6.5" fill="#f2f2f2" stroke="#f2f2f2" stroke-width="0.15">A</text>
<rect x="562.10" y="421" width="0.7" height="10.5" fill="#d0d0d0"/>
<text x="563.85" y="429.4" font-size="6.5" fill="#f2f2f2" stroke="#f2f2f2" stroke-width="0.15">M</text>
<rect x="571.40" y="421" width="0.7" height="10.5" fill="#d0d0d0"/>
<text x="573.15" y="429.4" font-size="6.5" fill="#f2f2f2" stroke="#f2f2f2" stroke-width="0.15">J</text>
<rect x="580.70" y="421" width="0.7" height="10.5" fill="#d0d0d0"/>
<text x="582.45" y="429.4" font-size="6.5" fill="#f2f2f2" stroke="#f2f2f2" stroke-width="0.15">J</text>
<rect x="592.32" y="421" width="0.7" height="10.5" fill="#d0d0d0"/>
<text x="594.07" y="429.4" font-size="6.5" fill="#f2f2f2" stroke="#f2f2f2" stroke-width="0.15">A</text>
<rect x="601.62" y="421" width="0.7" height="10.5" fill="#d0d0d0"/>
<text x="603.38" y="429.4" font-size="6.5" fill="#f2f2f2" stroke="#f2f2f2" stroke-width="0.15">S</text>
<rect x="610.92" y="421" width="0.7" height="10.5" fill="#d0d0d0"/>
<text x="612.67" y="429.4" font-size="6.5" fill="#f2f2f2" stroke="#f2f2f2" stroke-width="0.15">O</text>
<rect x="622.55" y="421" width="0.7" height="10.5" fill="#d0d0d0"/>
<text x="624.30" y="429.4" font-size="6.5" fill="#f2f2f2" stroke="#f2f2f2" stroke-width="0.15">N</text>
<rect x="631.85" y="421" width="0.7" height="10.5" fill="#d0d0d0"/>
<text x="633.60" y="429.4" font-size="6.5" fill="#f2f2f2" stroke="#f2f2f2" stroke-width="0.15">D</text>
<rect x="643.48" y="421" width="0.7" height="10.5" fill="#d0d0d0"/>
<text x="645.03" y="429.4" font-size="6.5" fill="#f2f2f2" textLength="15.8" lengthAdjust="spacingAndGlyphs" stroke="#f2f2f2" stroke-width="0.15">2022</text>
<rect x="662.07" y="421" width="0.7" height="10.5" fill="#d0d0d0"/>
<rect x="671.38" y="421" width="0.7" height="10.5" fill="#d0d0d0"/>
<text x="673.12" y="429.4" font-size="6.5" fill="#f2f2f2" stroke="#f2f2f2" stroke-width="0.15">A</text>
<rect x="683.00" y="421" width="0.7" height="10.5" fill="#d0d0d0"/>
<text x="684.75" y="429.4" font-size="6.5" fill="#f2f2f2" stroke="#f2f2f2" stroke-width="0.15">M</text>
<rect x="692.30" y="421" width="0.7" height="10.5" fill="#d0d0d0"/>
<text x="694.05" y="429.4" font-size="6.5" fill="#f2f2f2" stroke="#f2f2f2" stroke-width="0.15">J</text>
<rect x="701.60" y="421" width="0.7" height="10.5" fill="#d0d0d0"/>
<text x="703.35" y="429.4" font-size="6.5" fill="#f2f2f2" stroke="#f2f2f2" stroke-width="0.15">J</text>
<rect x="713.23" y="421" width="0.7" height="10.5" fill="#d0d0d0"/>
<text x="714.98" y="429.4" font-size="6.5" fill="#f2f2f2" stroke="#f2f2f2" stroke-width="0.15">A</text>
<rect x="722.52" y="421" width="0.7" height="10.5" fill="#d0d0d0"/>
<text x="724.27" y="429.4" font-size="6.5" fill="#f2f2f2" stroke="#f2f2f2" stroke-width="0.15">S</text>
<rect x="734.15" y="421" width="0.7" height="10.5" fill="#d0d0d0"/>
<text x="735.90" y="429.4" font-size="6.5" fill="#f2f2f2" stroke="#f2f2f2" stroke-width="0.15">O</text>
<rect x="743.45" y="421" width="0.7" height="10.5" fill="#d0d0d0"/>
<text x="745.20" y="429.4" font-size="6.5" fill="#f2f2f2" stroke="#f2f2f2" stroke-width="0.15">N</text>
<rect x="752.75" y="421" width="0.7" height="10.5" fill="#d0d0d0"/>
<text x="754.50" y="429.4" font-size="6.5" fill="#f2f2f2" stroke="#f2f2f2" stroke-width="0.15">D</text>
<rect x="764.38" y="421" width="0.7" height="10.5" fill="#d0d0d0"/>
<text x="765.93" y="429.4" font-size="6.5" fill="#f2f2f2" textLength="15.8" lengthAdjust="spacingAndGlyphs" stroke="#f2f2f2" stroke-width="0.15">2023</text>
<rect x="782.98" y="421" width="0.7" height="10.5" fill="#d0d0d0"/>
<rect x="794.60" y="421" width="0.7" height="10.5" fill="#d0d0d0"/>
<text x="796.35" y="429.4" font-size="6.5" fill="#f2f2f2" stroke="#f2f2f2" stroke-width="0.15">A</text>
<rect x="803.90" y="421" width="0.7" height="10.5" fill="#d0d0d0"/>
<text x="805.65" y="429.4" font-size="6.5" fill="#f2f2f2" stroke="#f2f2f2" stroke-width="0.15">M</text>
<rect x="813.20" y="421" width="0.7" height="10.5" fill="#d0d0d0"/>
<text x="814.95" y="429.4" font-size="6.5" fill="#f2f2f2" stroke="#f2f2f2" stroke-width="0.15">J</text>
<rect x="824.82" y="421" width="0.7" height="10.5" fill="#d0d0d0"/>
<text x="826.57" y="429.4" font-size="6.5" fill="#f2f2f2" stroke="#f2f2f2" stroke-width="0.15">J</text>
<rect x="834.12" y="421" width="0.7" height="10.5" fill="#d0d0d0"/>
<text x="835.88" y="429.4" font-size="6.5" fill="#f2f2f2" stroke="#f2f2f2" stroke-width="0.15">A</text>
<rect x="843.42" y="421" width="0.7" height="10.5" fill="#d0d0d0"/>
<text x="845.17" y="429.4" font-size="6.5" fill="#f2f2f2" stroke="#f2f2f2" stroke-width="0.15">S</text>
<rect x="851.6" y="421" width="0.7" height="10.5" fill="#d0d0d0"/>
<rect x="852.4" y="421" width="27.6" height="10.6" fill="#f0f0f0"/>
<circle cx="866.7" cy="426.4" r="2" fill="#f8fff8" stroke="#2ee02e" stroke-width="1.2"/>
<path d="M852.4 135.4 V408 H880" stroke="#e0e0e0" stroke-width="0.7" fill="none"/>
<path d="M852.4 139.60 h4.4" stroke="#e0e0e0" stroke-width="0.6"/>
<path d="M852.4 143.50 h1.8" stroke="#e0e0e0" stroke-width="0.45"/>
<text x="865.9" y="142.60" font-size="6.8" fill="#e8e8e8" stroke="#e8e8e8" stroke-width="0.18" textLength="12.6" lengthAdjust="spacingAndGlyphs">1.28</text>
<path d="M852.4 147.39 h4.4" stroke="#e0e0e0" stroke-width="0.6"/>
<path d="M852.4 151.29 h1.8" stroke="#e0e0e0" stroke-width="0.45"/>
<text x="865.9" y="150.39" font-size="6.8" fill="#e8e8e8" stroke="#e8e8e8" stroke-width="0.18" textLength="12.6" lengthAdjust="spacingAndGlyphs">1.27</text>
<path d="M852.4 155.18 h4.4" stroke="#e0e0e0" stroke-width="0.6"/>
<path d="M852.4 159.08 h1.8" stroke="#e0e0e0" stroke-width="0.45"/>
<text x="865.9" y="158.18" font-size="6.8" fill="#e8e8e8" stroke="#e8e8e8" stroke-width="0.18" textLength="12.6" lengthAdjust="spacingAndGlyphs">1.26</text>
<path d="M852.4 162.97 h4.4" stroke="#e0e0e0" stroke-width="0.6"/>
<path d="M852.4 166.87 h1.8" stroke="#e0e0e0" stroke-width="0.45"/>
<text x="865.9" y="165.97" font-size="6.8" fill="#e8e8e8" stroke="#e8e8e8" stroke-width="0.18" textLength="12.6" lengthAdjust="spacingAndGlyphs">1.25</text>
<path d="M852.4 170.76 h4.4" stroke="#e0e0e0" stroke-width="0.6"/>
<path d="M852.4 174.66 h1.8" stroke="#e0e0e0" stroke-width="0.45"/>
<text x="865.9" y="173.76" font-size="6.8" fill="#e8e8e8" stroke="#e8e8e8" stroke-width="0.18" textLength="12.6" lengthAdjust="spacingAndGlyphs">1.24</text>
<path d="M852.4 178.56 h4.4" stroke="#e0e0e0" stroke-width="0.6"/>
<path d="M852.4 182.45 h1.8" stroke="#e0e0e0" stroke-width="0.45"/>
<text x="865.9" y="181.56" font-size="6.8" fill="#e8e8e8" stroke="#e8e8e8" stroke-width="0.18" textLength="12.6" lengthAdjust="spacingAndGlyphs">1.23</text>
<path d="M852.4 186.35 h4.4" stroke="#e0e0e0" stroke-width="0.6"/>
<path d="M852.4 190.24 h1.8" stroke="#e0e0e0" stroke-width="0.45"/>
<text x="865.9" y="189.35" font-size="6.8" fill="#e8e8e8" stroke="#e8e8e8" stroke-width="0.18" textLength="12.6" lengthAdjust="spacingAndGlyphs">1.22</text>
<path d="M852.4 194.14 h4.4" stroke="#e0e0e0" stroke-width="0.6"/>
<path d="M852.4 198.03 h1.8" stroke="#e0e0e0" stroke-width="0.45"/>
<text x="865.9" y="197.14" font-size="6.8" fill="#e8e8e8" stroke="#e8e8e8" stroke-width="0.18" textLength="12.6" lengthAdjust="spacingAndGlyphs">1.21</text>
<path d="M852.4 201.93 h4.4" stroke="#e0e0e0" stroke-width="0.6"/>
<path d="M852.4 205.82 h1.8" stroke="#e0e0e0" stroke-width="0.45"/>
<text x="865.9" y="204.93" font-size="6.8" fill="#e8e8e8" stroke="#e8e8e8" stroke-width="0.18" textLength="12.6" lengthAdjust="spacingAndGlyphs">1.20</text>
<path d="M852.4 209.72 h4.4" stroke="#e0e0e0" stroke-width="0.6"/>
<path d="M852.4 213.62 h1.8" stroke="#e0e0e0" stroke-width="0.45"/>
<text x="865.9" y="212.72" font-size="6.8" fill="#e8e8e8" stroke="#e8e8e8" stroke-width="0.18" textLength="12.6" lengthAdjust="spacingAndGlyphs">1.19</text>
<path d="M852.4 217.51 h4.4" stroke="#e0e0e0" stroke-width="0.6"/>
<path d="M852.4 221.41 h1.8" stroke="#e0e0e0" stroke-width="0.45"/>
<text x="865.9" y="220.51" font-size="6.8" fill="#e8e8e8" stroke="#e8e8e8" stroke-width="0.18" textLength="12.6" lengthAdjust="spacingAndGlyphs">1.18</text>
<path d="M852.4 225.30 h4.4" stroke="#e0e0e0" stroke-width="0.6"/>
<path d="M852.4 229.20 h1.8" stroke="#e0e0e0" stroke-width="0.45"/>
<text x="865.9" y="228.30" font-size="6.8" fill="#e8e8e8" stroke="#e8e8e8" stroke-width="0.18" textLength="12.6" lengthAdjust="spacingAndGlyphs">1.17</text>
<path d="M852.4 233.09 h4.4" stroke="#e0e0e0" stroke-width="0.6"/>
<path d="M852.4 236.99 h1.8" stroke="#e0e0e0" stroke-width="0.45"/>
<text x="865.9" y="236.09" font-size="6.8" fill="#e8e8e8" stroke="#e8e8e8" stroke-width="0.18" textLength="12.6" lengthAdjust="spacingAndGlyphs">1.16</text>
<path d="M852.4 240.89 h4.4" stroke="#e0e0e0" stroke-width="0.6"/>
<path d="M852.4 244.78 h1.8" stroke="#e0e0e0" stroke-width="0.45"/>
<text x="865.9" y="243.89" font-size="6.8" fill="#e8e8e8" stroke="#e8e8e8" stroke-width="0.18" textLength="12.6" lengthAdjust="spacingAndGlyphs">1.15</text>
<path d="M852.4 248.68 h4.4" stroke="#e0e0e0" stroke-width="0.6"/>
<path d="M852.4 252.57 h1.8" stroke="#e0e0e0" stroke-width="0.45"/>
<text x="865.9" y="251.68" font-size="6.8" fill="#e8e8e8" stroke="#e8e8e8" stroke-width="0.18" textLength="12.6" lengthAdjust="spacingAndGlyphs">1.14</text>
<path d="M852.4 256.47 h4.4" stroke="#e0e0e0" stroke-width="0.6"/>
<path d="M852.4 260.36 h1.8" stroke="#e0e0e0" stroke-width="0.45"/>
<text x="865.9" y="259.47" font-size="6.8" fill="#e8e8e8" stroke="#e8e8e8" stroke-width="0.18" textLength="12.6" lengthAdjust="spacingAndGlyphs">1.13</text>
<path d="M852.4 264.26 h4.4" stroke="#e0e0e0" stroke-width="0.6"/>
<path d="M852.4 268.15 h1.8" stroke="#e0e0e0" stroke-width="0.45"/>
<path d="M852.4 272.05 h4.4" stroke="#e0e0e0" stroke-width="0.6"/>
<path d="M852.4 275.95 h1.8" stroke="#e0e0e0" stroke-width="0.45"/>
<text x="865.9" y="275.05" font-size="6.8" fill="#e8e8e8" stroke="#e8e8e8" stroke-width="0.18" textLength="12.6" lengthAdjust="spacingAndGlyphs">1.11</text>
<path d="M852.4 279.84 h4.4" stroke="#e0e0e0" stroke-width="0.6"/>
<path d="M852.4 283.74 h1.8" stroke="#e0e0e0" stroke-width="0.45"/>
<text x="865.9" y="282.84" font-size="6.8" fill="#e8e8e8" stroke="#e8e8e8" stroke-width="0.18" textLength="12.6" lengthAdjust="spacingAndGlyphs">1.10</text>
<path d="M852.4 287.63 h4.4" stroke="#e0e0e0" stroke-width="0.6"/>
<path d="M852.4 291.53 h1.8" stroke="#e0e0e0" stroke-width="0.45"/>
<text x="865.9" y="290.63" font-size="6.8" fill="#e8e8e8" stroke="#e8e8e8" stroke-width="0.18" textLength="12.6" lengthAdjust="spacingAndGlyphs">1.09</text>
<path d="M852.4 295.42 h4.4" stroke="#e0e0e0" stroke-width="0.6"/>
<path d="M852.4 299.32 h1.8" stroke="#e0e0e0" stroke-width="0.45"/>
<text x="865.9" y="298.42" font-size="6.8" fill="#e8e8e8" stroke="#e8e8e8" stroke-width="0.18" textLength="12.6" lengthAdjust="spacingAndGlyphs">1.08</text>
<path d="M852.4 303.21 h4.4" stroke="#e0e0e0" stroke-width="0.6"/>
<path d="M852.4 307.11 h1.8" stroke="#e0e0e0" stroke-width="0.45"/>
<text x="865.9" y="306.21" font-size="6.8" fill="#e8e8e8" stroke="#e8e8e8" stroke-width="0.18" textLength="12.6" lengthAdjust="spacingAndGlyphs">1.07</text>
<path d="M852.4 311.01 h4.4" stroke="#e0e0e0" stroke-width="0.6"/>
<path d="M852.4 314.90 h1.8" stroke="#e0e0e0" stroke-width="0.45"/>
<text x="865.9" y="314.01" font-size="6.8" fill="#e8e8e8" stroke="#e8e8e8" stroke-width="0.18" textLength="12.6" lengthAdjust="spacingAndGlyphs">1.06</text>
<path d="M852.4 318.80 h4.4" stroke="#e0e0e0" stroke-width="0.6"/>
<path d="M852.4 322.69 h1.8" stroke="#e0e0e0" stroke-width="0.45"/>
<text x="865.9" y="321.80" font-size="6.8" fill="#e8e8e8" stroke="#e8e8e8" stroke-width="0.18" textLength="12.6" lengthAdjust="spacingAndGlyphs">1.05</text>
<path d="M852.4 326.59 h4.4" stroke="#e0e0e0" stroke-width="0.6"/>
<path d="M852.4 330.48 h1.8" stroke="#e0e0e0" stroke-width="0.45"/>
<text x="865.9" y="329.59" font-size="6.8" fill="#e8e8e8" stroke="#e8e8e8" stroke-width="0.18" textLength="12.6" lengthAdjust="spacingAndGlyphs">1.04</text>
<path d="M852.4 334.38 h4.4" stroke="#e0e0e0" stroke-width="0.6"/>
<path d="M852.4 338.27 h1.8" stroke="#e0e0e0" stroke-width="0.45"/>
<text x="865.9" y="337.38" font-size="6.8" fill="#e8e8e8" stroke="#e8e8e8" stroke-width="0.18" textLength="12.6" lengthAdjust="spacingAndGlyphs">1.03</text>
<path d="M852.4 342.17 h4.4" stroke="#e0e0e0" stroke-width="0.6"/>
<path d="M852.4 346.07 h1.8" stroke="#e0e0e0" stroke-width="0.45"/>
<text x="865.9" y="345.17" font-size="6.8" fill="#e8e8e8" stroke="#e8e8e8" stroke-width="0.18" textLength="12.6" lengthAdjust="spacingAndGlyphs">1.02</text>
<path d="M852.4 349.96 h4.4" stroke="#e0e0e0" stroke-width="0.6"/>
<path d="M852.4 353.86 h1.8" stroke="#e0e0e0" stroke-width="0.45"/>
<text x="865.9" y="352.96" font-size="6.8" fill="#e8e8e8" stroke="#e8e8e8" stroke-width="0.18" textLength="12.6" lengthAdjust="spacingAndGlyphs">1.01</text>
<path d="M852.4 357.75 h4.4" stroke="#e0e0e0" stroke-width="0.6"/>
<path d="M852.4 361.65 h1.8" stroke="#e0e0e0" stroke-width="0.45"/>
<text x="865.9" y="360.75" font-size="6.8" fill="#e8e8e8" stroke="#e8e8e8" stroke-width="0.18" textLength="12.6" lengthAdjust="spacingAndGlyphs">1.00</text>
<path d="M852.4 365.54 h4.4" stroke="#e0e0e0" stroke-width="0.6"/>
<path d="M852.4 369.44 h1.8" stroke="#e0e0e0" stroke-width="0.45"/>
<text x="865.9" y="368.54" font-size="6.8" fill="#e8e8e8" stroke="#e8e8e8" stroke-width="0.18" textLength="12.6" lengthAdjust="spacingAndGlyphs">0.99</text>
<path d="M852.4 373.34 h4.4" stroke="#e0e0e0" stroke-width="0.6"/>
<path d="M852.4 377.23 h1.8" stroke="#e0e0e0" stroke-width="0.45"/>
<text x="865.9" y="376.34" font-size="6.8" fill="#e8e8e8" stroke="#e8e8e8" stroke-width="0.18" textLength="12.6" lengthAdjust="spacingAndGlyphs">0.98</text>
<path d="M852.4 381.13 h4.4" stroke="#e0e0e0" stroke-width="0.6"/>
<path d="M852.4 385.02 h1.8" stroke="#e0e0e0" stroke-width="0.45"/>
<text x="865.9" y="384.13" font-size="6.8" fill="#e8e8e8" stroke="#e8e8e8" stroke-width="0.18" textLength="12.6" lengthAdjust="spacingAndGlyphs">0.97</text>
<path d="M852.4 388.92 h4.4" stroke="#e0e0e0" stroke-width="0.6"/>
<path d="M852.4 392.81 h1.8" stroke="#e0e0e0" stroke-width="0.45"/>
<text x="865.9" y="391.92" font-size="6.8" fill="#e8e8e8" stroke="#e8e8e8" stroke-width="0.18" textLength="12.6" lengthAdjust="spacingAndGlyphs">0.96</text>
<path d="M852.4 396.71 h4.4" stroke="#e0e0e0" stroke-width="0.6"/>
<path d="M852.4 400.60 h1.8" stroke="#e0e0e0" stroke-width="0.45"/>
<text x="865.9" y="399.71" font-size="6.8" fill="#e8e8e8" stroke="#e8e8e8" stroke-width="0.18" textLength="12.6" lengthAdjust="spacingAndGlyphs">0.95</text>
<path d="M852.4 404.50 h4.4" stroke="#e0e0e0" stroke-width="0.6"/>
<text x="865.9" y="407.50" font-size="6.8" fill="#e8e8e8" stroke="#e8e8e8" stroke-width="0.18" textLength="12.6" lengthAdjust="spacingAndGlyphs">0.94</text>
<rect x="854.3" y="260.3" width="24.4" height="9" fill="#000" stroke="#e8e8e8" stroke-width="0.7"/>
<text x="855.9" y="267.2" font-size="6.5" fill="#14e014" textLength="21.7" lengthAdjust="spacingAndGlyphs">1.11880</text>
<rect x="431" y="436.3" width="322" height="2.4" rx="1.2" fill="#8a8a8a"/>
<rect x="765.3" y="433.4" width="0.6" height="8.4" fill="#a0a0a0"/>
<path d="M770.6 437.6 a3 3 0 0 1 5.4 -1.6 M776.6 437.6 a3 3 0 0 1 -5.4 1.6" fill="none" stroke="#5a5a5a" stroke-width="1.1"/><path d="M776.8 433.6 v2.8 h-2.8z M770.4 441.6 v-2.8 h2.8z" fill="#5a5a5a"/>
<text x="782.6" y="440.4" font-size="7.4" fill="#5e5e5e" textLength="6.2" lengthAdjust="spacingAndGlyphs" font-weight="bold">W</text>
<rect x="793.4" y="433.4" width="0.6" height="8.4" fill="#a0a0a0"/>
<path d="M801 435.4 v4.4" stroke="#5a5a5a" stroke-width="0.9"/><path d="M801 434.4 l1.7 2 h-3.4z M801 440.8 l1.7 -2 h-3.4z" fill="#5a5a5a"/>
<path d="M812.8 434.4 v6.4 M809.6 437.6 h6.4" stroke="#5a5a5a" stroke-width="0.9"/><path d="M812.8 433.6 l1.5 1.9 h-3z M812.8 441.6 l1.5 -1.9 h-3z M808.8 437.6 l1.9 -1.5 v3z M816.8 437.6 l-1.9 -1.5 v3z" fill="#5a5a5a"/>
<circle cx="825" cy="437.6" r="3" fill="#f4f4f4" stroke="#666" stroke-width="0.6"/><path d="M823.4 437.6 h3.2" stroke="#5a5a5a" stroke-width="0.8"/>
<circle cx="837" cy="437.6" r="3" fill="#f4f4f4" stroke="#666" stroke-width="0.6"/><path d="M835.4 437.6 h3.2 M837 436 v3.2" stroke="#5a5a5a" stroke-width="0.8"/>
<rect x="844.4" y="433.4" width="0.6" height="8.4" fill="#a0a0a0"/>
<path d="M854.6 435 v5.2 l-3.4 -2.6z M862.6 435 v5.2 l3.4 -2.6z" fill="#c4c4c4"/>
<rect x="872.6" y="434.6" width="6" height="6" fill="#d8d8d8" stroke="#666" stroke-width="0.6"/><rect x="874" y="436.4" width="3.2" height="2.6" fill="#999"/>
<rect x="0.0" y="446.4" width="4" height="16.8" fill="url(#gg)"/><rect x="1.5" y="454.2" width="1.1" height="1.3" fill="#222"/>
<rect x="4.8" y="449.2" width="74" height="11.3" fill="#fff" stroke="#a8a8a8" stroke-width="0.6"/>
<rect x="13.6" y="454.6" width="46.4" height="1" fill="#7c7c7c"/>
<rect x="69.2" y="449.4" width="9.5" height="10.9" fill="#e2effc" stroke="#3a92e6" stroke-width="0.7"/>
<path d="M71.6 454 L74.1 456.4 L76.6 454" fill="none" stroke="#444" stroke-width="0.7"/>
<rect x="82.7" y="449.2" width="56.6" height="11.3" fill="#fff" stroke="#a8a8a8" stroke-width="0.6"/>
<rect x="89.2" y="454.6" width="33.8" height="1" fill="#7c7c7c"/>
<path d="M132.4 454 L134.9 456.4 L137.4 454" fill="none" stroke="#666" stroke-width="0.7"/>
<rect x="143.7" y="446.5" width="0.6" height="16" fill="#d0d0d0"/>
<rect x="146.8" y="446.4" width="4" height="16.8" fill="url(#gg)"/><rect x="148.3" y="454.2" width="1.1" height="1.3" fill="#222"/>
<rect x="153.40" y="449" width="5.5" height="5.5" fill="#8b0000" stroke="#8c8c8c" stroke-width="0.35"/>
<rect x="153.40" y="455.7" width="5.5" height="5.6" fill="#3a87b5" stroke="#8c8c8c" stroke-width="0.35"/>
<rect x="160.22" y="449" width="5.5" height="5.5" fill="#006400" stroke="#8c8c8c" stroke-width="0.35"/>
<rect x="160.22" y="455.7" width="5.5" height="5.6" fill="#92cde8" stroke="#8c8c8c" stroke-width="0.35"/>
<rect x="167.04" y="449" width="5.5" height="5.5" fill="#ff7f27" stroke="#8c8c8c" stroke-width="0.35"/>
<rect x="167.04" y="455.7" width="5.5" height="5.6" fill="#9bbb59" stroke="#8c8c8c" stroke-width="0.35"/>
<rect x="173.86" y="449" width="5.5" height="5.5" fill="#ffb366" stroke="#8c8c8c" stroke-width="0.35"/>
<rect x="173.86" y="455.7" width="5.5" height="5.6" fill="#b3a2c7" stroke="#8c8c8c" stroke-width="0.35"/>
<rect x="180.68" y="449" width="5.5" height="5.5" fill="#0000ff" stroke="#8c8c8c" stroke-width="0.35"/>
<rect x="180.68" y="455.7" width="5.5" height="5.6" fill="#d99694" stroke="#8c8c8c" stroke-width="0.35"/>
<rect x="187.50" y="449" width="5.5" height="5.5" fill="#32cd32" stroke="#8c8c8c" stroke-width="0.35"/>
<rect x="187.50" y="455.7" width="5.5" height="5.6" fill="#ffc125" stroke="#8c8c8c" stroke-width="0.35"/>
<rect x="194.32" y="449" width="5.5" height="5.5" fill="#ff0000" stroke="#8c8c8c" stroke-width="0.35"/>
<rect x="194.32" y="455.7" width="5.5" height="5.6" fill="#ffffff" stroke="#8c8c8c" stroke-width="0.35"/>
<rect x="201.14" y="449" width="5.5" height="5.5" fill="#000000" stroke="#8c8c8c" stroke-width="0.35"/>
<rect x="201.14" y="455.7" width="5.5" height="5.6" fill="#3f9fd8" stroke="#8c8c8c" stroke-width="0.35"/>
<path d="M208 454.4 h3.4 l-1.7 2.2z" fill="#222"/>
<rect x="218" y="446.5" width="0.6" height="16" fill="#d0d0d0"/>
<rect x="221.20000000000002" y="446.4" width="4" height="16.8" fill="url(#gg)"/><rect x="222.70000000000002" y="454.2" width="1.1" height="1.3" fill="#222"/>
<rect x="228.4" y="451.6" width="9.4" height="7.6" fill="#f8f8f8" stroke="#8a9ab0" stroke-width="0.6"/>
<path d="M229.6 457 l2 -2 l1.6 1 l2 -2.6" stroke="#d83030" stroke-width="0.8" fill="none"/>
<text x="234.4" y="458.4" font-size="5.4" fill="#223" font-weight="bold">1</text>
<rect x="244" y="451.6" width="9.4" height="7.6" fill="#f8f8f8" stroke="#8a9ab0" stroke-width="0.6"/>
<path d="M245.2 457 l2 -2 l1.6 1 l2 -2.6" stroke="#d83030" stroke-width="0.8" fill="none"/>
<text x="250" y="458.4" font-size="5.4" fill="#223" font-weight="bold">2</text>
<rect x="259.6" y="451.6" width="9.4" height="7.6" fill="#f8f8f8" stroke="#8a9ab0" stroke-width="0.6"/>
<path d="M260.8 457 l2 -2 l1.6 1 l2 -2.6" stroke="#d83030" stroke-width="0.8" fill="none"/>
<text x="265.6" y="458.4" font-size="5.4" fill="#223" font-weight="bold">3</text>
<rect x="275.2" y="451.6" width="9.4" height="7.6" fill="#f8f8f8" stroke="#8a9ab0" stroke-width="0.6"/>
<path d="M276.4 457 l2 -2 l1.6 1 l2 -2.6" stroke="#d83030" stroke-width="0.8" fill="none"/>
<text x="281.2" y="458.4" font-size="5.4" fill="#223" font-weight="bold">4</text>
<rect x="290.6" y="451.6" width="9.4" height="7.6" fill="#f8f8f8" stroke="#8a9ab0" stroke-width="0.6"/>
<path d="M291.8 457 l2 -2 l1.6 1 l2 -2.6" stroke="#d83030" stroke-width="0.8" fill="none"/>
<text x="296.6" y="458.4" font-size="5.4" fill="#223" font-weight="bold">5</text>
<rect x="306.2" y="451.6" width="9.4" height="7.6" fill="#f8f8f8" stroke="#8a9ab0" stroke-width="0.6"/>
<path d="M307.4 457 l2 -2 l1.6 1 l2 -2.6" stroke="#d83030" stroke-width="0.8" fill="none"/>
<text x="312.2" y="458.4" font-size="5.4" fill="#223" font-weight="bold">6</text>
<rect x="323" y="446.5" width="0.6" height="16" fill="#b8b8b8"/>
<rect x="0" y="464.4" width="880" height="1.4" fill="#59595b"/><rect x="0" y="465.8" width="880" height="1.3" fill="#3c3a40"/>
<rect x="845.9" y="465.9" width="11.2" height="1.5" fill="#f0f0f0"/><rect x="859.3" y="465.9" width="11.6" height="1.5" fill="#f0f0f0"/><rect x="850.4" y="466.4" width="2" height="1" fill="#20a020"/><rect x="864" y="466.4" width="2.4" height="1" fill="#3a6ad0"/>
<defs><radialGradient id="sun" cx="0.4" cy="0.35" r="0.7"><stop offset="0" stop-color="#ffc830"/><stop offset="1" stop-color="#f07210"/></radialGradient></defs>
<circle cx="18.6" cy="481.6" r="5.7" fill="url(#sun)"/>
<text x="30" y="479.5" font-size="6.8" fill="#fff" textLength="14.5" lengthAdjust="spacingAndGlyphs">30°C</text>
<text x="30" y="488.9" font-size="6.8" fill="#f0f0f0" textLength="9.4" lengthAdjust="spacingAndGlyphs">Sol</text>
<rect x="224.8" y="474.8" width="6.3" height="6.3" rx="0.4" fill="#5ccefa"/>
<rect x="231.8" y="474.8" width="6.3" height="6.3" rx="0.4" fill="#46baf6"/>
<rect x="224.8" y="481.8" width="6.3" height="6.3" rx="0.4" fill="#3cb2f4"/>
<rect x="231.8" y="481.8" width="6.3" height="6.3" rx="0.4" fill="#28a2ee"/>
<rect x="246" y="472" width="62.4" height="18.4" rx="9.2" fill="#322f38"/>
<circle cx="263.6" cy="480.4" r="2.7" fill="none" stroke="#f4f4f4" stroke-width="0.9"/><path d="M261.6 482.4 L259.2 485" stroke="#f4f4f4" stroke-width="1"/>
<text x="269.6" y="483.6" font-size="6.8" fill="#f4f4f4" textLength="26.6" lengthAdjust="spacingAndGlyphs">Procurar</text>
<defs><linearGradient id="tm" x1="0" y1="0" x2="1" y2="1"><stop offset="0" stop-color="#8a62d0"/><stop offset="1" stop-color="#5468dc"/></linearGradient></defs>
<circle cx="322" cy="481.2" r="6.5" fill="url(#tm)"/><path d="M315.7 487.6 l0.8 -4.6 l4 3.4z" fill="#6a64d4"/><rect x="318.2" y="478.79999999999995" width="5" height="4.8" rx="0.8" fill="#fff"/><path d="M323.6 481.2 l2.6 -2 v4z" fill="#fff"/>
<path d="M340.6 475.6 a0.8 0.8 0 0 1 0.8 -0.8 h4 l1.6 1.8 h7.4 v3 h-13.8z" fill="#e8a81c"/><rect x="340.6" y="477.3" width="13.8" height="10.2" rx="0.8" fill="#fcd246"/><rect x="343.2" y="484" width="8.6" height="3.2" rx="0.5" fill="#1c80e0"/>
<rect x="373.6" y="476.4" width="5" height="9.8" rx="0.5" fill="#de5a3c"/><path d="M375 478.4 h2.6 v2.6 h-2.6z M375 482.6 h2.6 M375 484.4 h2.6" stroke="#fbe8e2" stroke-width="0.7" fill="#fbe8e2"/><path d="M366.2 476 L373.8 475 V487.4 L366.2 486.4z" fill="#c8432a"/>
<text x="367.8" y="484.3" font-size="7" fill="#fff" textLength="4.4" lengthAdjust="spacingAndGlyphs" font-weight="bold">P</text>
<path d="M397.2 474.4 L401.6 486 H392.8z" fill="#f08a10"/><rect x="394.2" y="480.6" width="6" height="1.8" fill="#fff"/><rect x="395.4" y="477" width="3.6" height="1.5" fill="#fff"/><rect x="391.4" y="485.4" width="11.6" height="2.4" rx="0.6" fill="#e07808"/>
<circle cx="423" cy="481.4" r="6.8" fill="#e8443a"/>
<path d="M423 481.4 L417.11 478.00 A6.8 6.8 0 0 0 423 488.2z" fill="#30a050"/>
<path d="M423 481.4 L423 488.2 A6.8 6.8 0 0 0 428.89 478.00z" fill="#fcc934"/>
<circle cx="423" cy="481.4" r="3.13" fill="#fff"/><circle cx="423" cy="481.4" r="2.45" fill="#4a8af4"/>
<circle cx="428" cy="475.8" r="4.3" fill="#f07a1e"/>
<text x="426.4" y="477.6" font-size="4.8" fill="#fff">N</text>
<rect x="421" y="490.7" width="4" height="1" rx="0.5" fill="#9a9a9a"/>
<rect x="449" y="476.4" width="5.6" height="9.8" rx="0.5" fill="#4e70c8"/><path d="M451.8 477.6 l1.5 1.5 l-1.5 1.5 l-1.5 -1.5z M450.7 482.2 h2.4 v2.4 h-2.4z" fill="#f0f4fc"/><path d="M442.2 476 L449.4 475 V487.4 L442.2 486.4z" fill="#3558b4"/>
<text x="443.4" y="484.2" font-size="7" fill="#fff" textLength="4.6" lengthAdjust="spacingAndGlyphs" font-weight="bold">V</text>
<rect x="474.6" y="476.4" width="4.8" height="9.8" rx="0.5" fill="#176a38"/><rect x="475.8" y="477.6" width="2.6" height="7.4" fill="#2a8a4e" stroke="#eef6f0" stroke-width="0.6"/><path d="M467.2 476 L474.8 475 V487.4 L467.2 486.4z" fill="#1e7a44"/>
<text x="468.8" y="484.2" font-size="7" fill="#fff" textLength="4.4" lengthAdjust="spacingAndGlyphs" font-weight="bold">X</text>
<rect x="471.2" y="490.7" width="4" height="1" rx="0.5" fill="#9a9a9a"/>
<rect x="499.6" y="476.4" width="5" height="9.8" rx="0.5" fill="#3e6ec8"/><path d="M500.8 478.4 h2.8 M500.8 480.4 h2.8 M500.8 482.4 h2.8 M500.8 484.4 h2.8" stroke="#f0f4fc" stroke-width="0.7"/><path d="M492.4 476 L499.8 475 V487.4 L492.4 486.4z" fill="#2a58b0"/>
<text x="493.2" y="484" font-size="6.4" fill="#fff" textLength="6" lengthAdjust="spacingAndGlyphs" font-weight="bold">W</text>
<rect x="516.9" y="474" width="14.2" height="14" fill="#049494"/>
<path d="M524 475.4 v4" stroke="#0a1414" stroke-width="1"/><path d="M522.8 476.6 h2.4" stroke="#0a1414" stroke-width="0.7"/>
<ellipse cx="521.2" cy="480.9" rx="3" ry="2.5" fill="#fcfcfc" stroke="#0a2a2a" stroke-width="0.4"/><ellipse cx="526.9" cy="480.9" rx="3" ry="2.5" fill="#fcfcfc" stroke="#0a2a2a" stroke-width="0.4"/>
<path d="M519.8 482.4 h8.6 l-0.8 4.4 h-7z" fill="#e4e4e4" stroke="#0a2a2a" stroke-width="0.4"/><path d="M520.4 484 h7.4 M520.6 485.4 h7" stroke="#9a9a9a" stroke-width="0.4"/><path d="M524 479 v3.4" stroke="#0a1414" stroke-width="0.6"/>
<rect x="543.6" y="474.3" width="10.4" height="13.7" rx="0.9" fill="#b4bccc" stroke="#7a88a4" stroke-width="0.7"/><rect x="545.1" y="475.9" width="7.6" height="2.2" fill="#40c4f6"/>
<rect x="545.10" y="479.40" width="2" height="2" fill="#e8eef6"/>
<rect x="545.10" y="482.15" width="2" height="2" fill="#e8eef6"/>
<rect x="545.10" y="484.90" width="2" height="2" fill="#e8eef6"/>
<rect x="547.85" y="479.40" width="2" height="2" fill="#e8eef6"/>
<rect x="547.85" y="482.15" width="2" height="2" fill="#e8eef6"/>
<rect x="547.85" y="484.90" width="2" height="2" fill="#e8eef6"/>
<rect x="550.60" y="479.40" width="2" height="2" fill="#e8eef6"/>
<rect x="550.6" y="482.1" width="2.1" height="4.8" fill="#1c4a9c"/>
<rect x="546.9" y="490.7" width="4" height="1" rx="0.5" fill="#9a9a9a"/>
<circle cx="574.1" cy="481" r="6.9" fill="#e8443a"/>
<path d="M574.1 481 L568.12 477.55 A6.9 6.9 0 0 0 574.1 487.9z" fill="#30a050"/>
<path d="M574.1 481 L574.1 487.9 A6.9 6.9 0 0 0 580.08 477.55z" fill="#fcc934"/>
<circle cx="574.1" cy="481" r="3.17" fill="#fff"/><circle cx="574.1" cy="481" r="2.48" fill="#4a8af4"/>
<defs><linearGradient id="edg" x1="0" y1="0.2" x2="1" y2="0.6"><stop offset="0" stop-color="#1a6ad0"/><stop offset="0.55" stop-color="#2a9ae8"/><stop offset="1" stop-color="#40c46a"/></linearGradient></defs>
<circle cx="599.4" cy="481" r="6.9" fill="url(#edg)"/>
<path d="M596.2 484.6 c-2.2 -3 0.6 -6.6 4.2 -6.4 c2.6 0.2 4.4 2 4.2 4 c-1.6 1 -4 0.8 -4.4 -0.6 c0 -1 0.6 -1.4 0.6 -1.4 c-2 0.2 -2.6 2.2 -1.8 3.8 c0.8 1.6 3.2 2.4 5.4 1.4 c-2 2.6 -6.4 2.2 -8.2 -0.8z" fill="#1a1a28" opacity="0.8"/>
<path d="M593 483.4 c1 4 6.6 5.6 10.4 2.4 c-3.6 1.4 -7.4 0.4 -8.4 -3.4z" fill="#1450b0"/>
<rect x="618" y="474.3" width="14" height="13" rx="1.6" fill="#27141a" stroke="#a81e36" stroke-width="0.8"/>
<text x="620.2" y="485.3" font-size="6.8" fill="#c4283c" textLength="8.8" lengthAdjust="spacingAndGlyphs">Pro</text>
<rect x="626.5" y="477" width="2.2" height="0.9" fill="#c4283c"/>
<rect x="622.9" y="490.7" width="3.4" height="1" rx="0.5" fill="#a8a8a8"/>
<defs><linearGradient id="msb" x1="0" y1="0" x2="0" y2="1"><stop offset="0" stop-color="#050505"/><stop offset="1" stop-color="#2a1c10"/></linearGradient></defs>
<rect x="638.2" y="469.6" width="22.8" height="23" rx="2.2" fill="#36343c"/>
<rect x="643.5" y="474.1" width="12.8" height="13.2" fill="url(#msb)"/>
<path d="M646.2 486.6 v-4.2 l1.9 -0.6 v4.8z M649 486.6 v-7.4 l1.9 -0.6 v8z M651.8 486.6 v-11 l1.8 -0.6 v11.6z" fill="#f08c22"/>
<rect x="645.2" y="490.5" width="8.8" height="1.4" rx="0.7" fill="#4ab0f0"/>
<path d="M774.2 483 L777.4 479.8 L780.6 483" fill="none" stroke="#f0f0f0" stroke-width="0.8"/>
<path d="M788.6 479.4 a6.4 6.4 0 0 1 9.4 0 M790.2 481.2 a4.2 4.2 0 0 1 6.2 0 M791.8 483 a2 2 0 0 1 3 0" fill="none" stroke="#f0f0f0" stroke-width="0.8"/><circle cx="793.3" cy="484.6" r="0.7" fill="#f0f0f0"/>
<path d="M803 480 h1.8 l2.2 -2 v7 l-2.2 -2 h-1.8z" fill="#f0f0f0"/><path d="M808.4 479.6 a2.6 2.6 0 0 1 0 3.8 M810 478.2 a4.4 4.4 0 0 1 0 6.6" fill="none" stroke="#f0f0f0" stroke-width="0.7"/>
<rect x="817.4" y="478.6" width="7.6" height="5.6" rx="1" fill="none" stroke="#f0f0f0" stroke-width="0.8"/><rect x="825.2" y="480.2" width="1" height="2.4" fill="#f0f0f0"/><rect x="818.4" y="479.6" width="3.6" height="3.6" fill="#f0f0f0"/><path d="M816 479 v5" stroke="#f0f0f0" stroke-width="0.9"/>
<text x="869.6" y="479" font-size="6.6" fill="#f4f4f4" text-anchor="end" textLength="16.6" lengthAdjust="spacingAndGlyphs">15:49</text>
<text x="869.6" y="488" font-size="6.6" fill="#f4f4f4" text-anchor="end" textLength="35" lengthAdjust="spacingAndGlyphs">13/07/2023</text>
</svg>
</body></html>
